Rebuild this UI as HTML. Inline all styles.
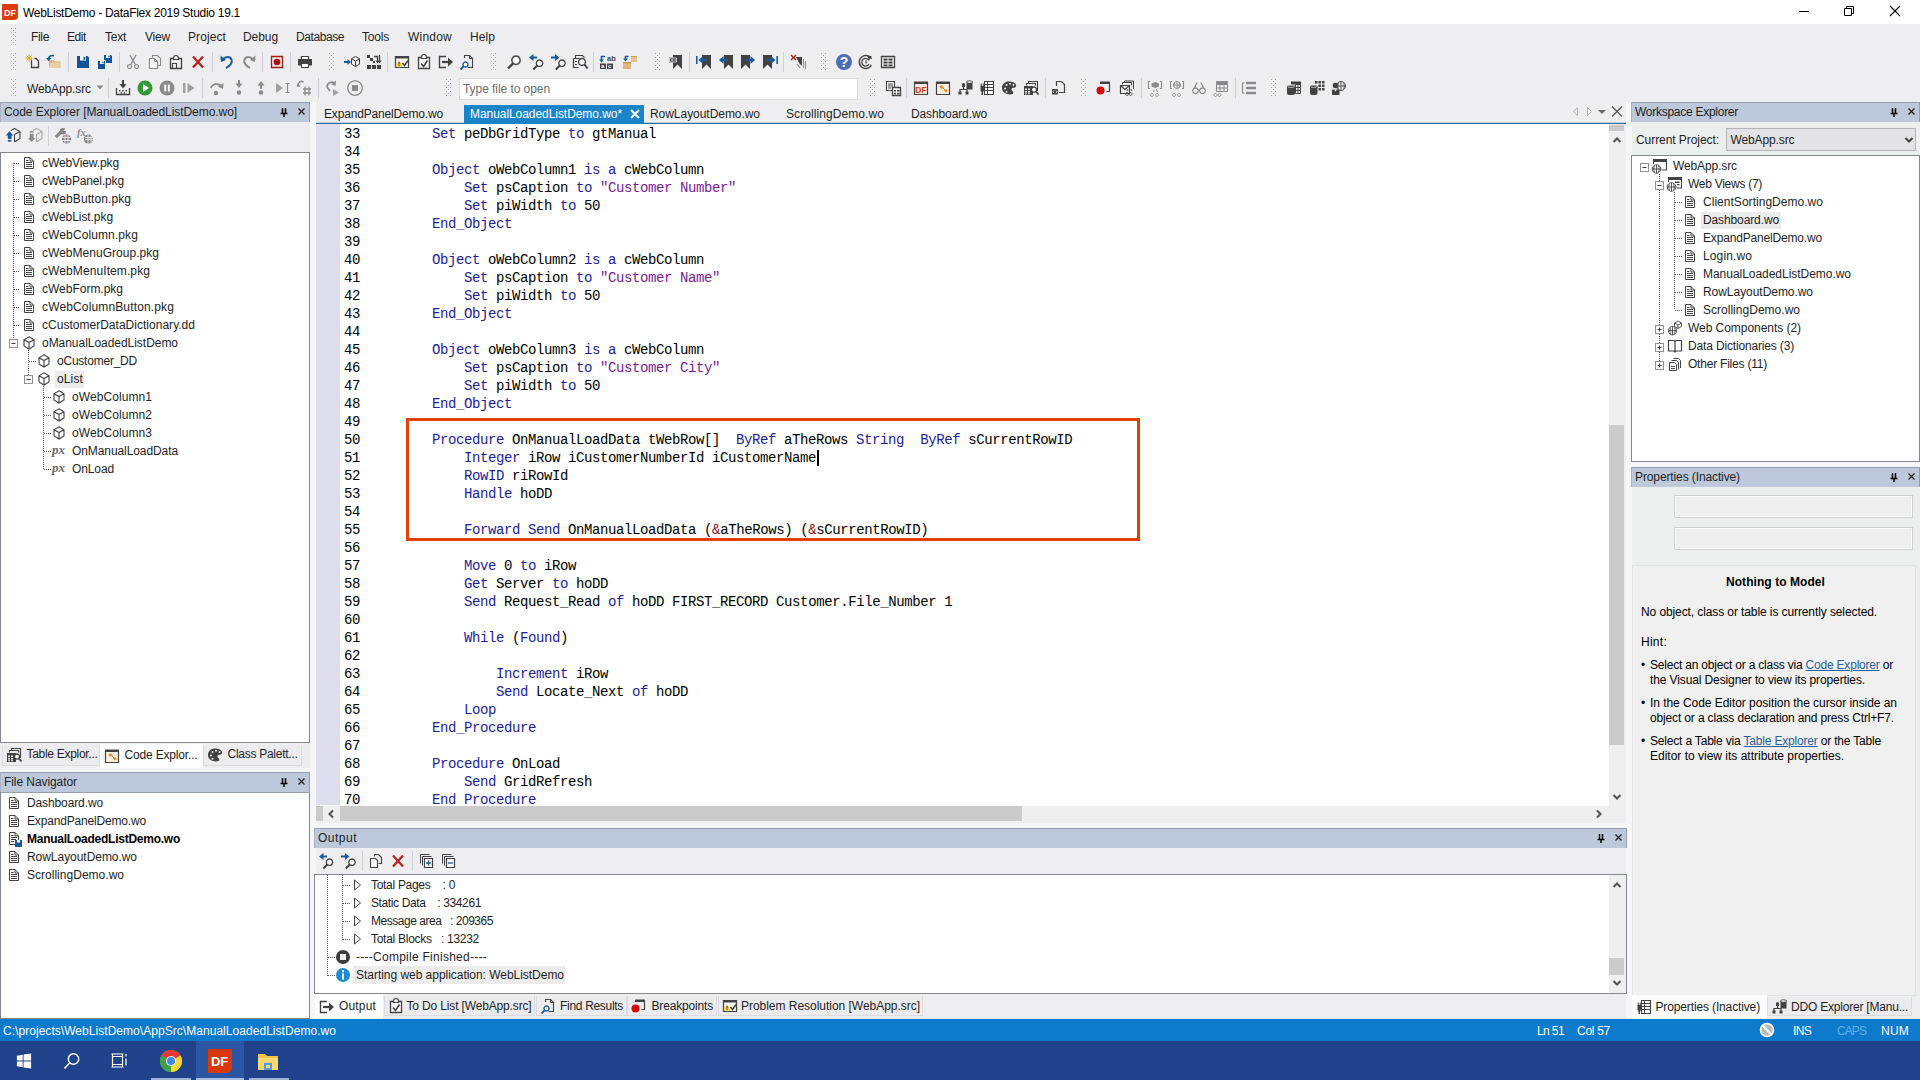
<!DOCTYPE html>
<html><head><meta charset="utf-8"><title>WebListDemo - DataFlex 2019 Studio 19.1</title>
<style>
html,body{margin:0;padding:0;}
body{width:1920px;height:1080px;overflow:hidden;position:relative;background:#eeeef0;font-family:"Liberation Sans",sans-serif;font-size:12px;color:#1e1e1e;}
body div,body span.t,body svg.i,body pre{position:absolute;box-sizing:border-box;}
span.t{white-space:pre;}
pre{margin:0;font-family:"Liberation Mono",monospace;font-size:14px;letter-spacing:-0.4px;line-height:18px;color:#000;white-space:pre;}
pre b{font-weight:normal;color:#1c1c9c;}
pre i{font-style:normal;color:#7a1a96;}
pre u{text-decoration:none;color:#8a1010;}
svg.i{overflow:visible;}
</style></head><body>
<div style="left:0px;top:0px;width:1920px;height:24px;background:#fff;"></div>
<div style="left:2px;top:4px;width:16px;height:16px;background:#dc3d0d;border-radius:1px 1px 4px 1px;"></div>
<span class="t" style="left:4px;top:4.03px;line-height:18px;font-size:9px;color:#fff;letter-spacing:0.002px;font-weight:bold;">DF</span>
<span class="t" style="left:23px;top:3.53px;line-height:18px;font-size:12px;color:#000;letter-spacing:-0.279px;">WebListDemo - DataFlex 2019 Studio 19.1</span>
<svg class="i" style="left:1790px;top:0" width="130" height="24"><path d="M9 11.5h10" stroke="#000" stroke-width="1"/><path d="M54.5 8.5h7v7h-7z M56.5 8.5v-2h7v7h-2" fill="none" stroke="#000" stroke-width="1"/><path d="M100 6l10 10M110 6l-10 10" stroke="#000" stroke-width="1.1"/></svg>
<div style="left:1632px;top:122px;width:288px;height:897px;background:#edeeee;"></div>
<div style="left:310px;top:102px;width:6px;height:917px;background:#f6f6f8;"></div>
<div style="left:1626px;top:102px;width:6px;height:917px;background:#f7f7f9;"></div>
<div style="left:316px;top:823px;width:1310px;height:5px;background:#f6f6f8;"></div>
<div style="left:1632px;top:462px;width:288px;height:5px;background:#f7f7f9;"></div>
<div style="left:0px;top:768px;width:310px;height:4px;background:#f4f4f6;"></div>
<svg class="i" style="left:11px;top:28px" width="5" height="18"><defs><pattern id="g11_28" width="4" height="4" patternUnits="userSpaceOnUse"><rect x="0" y="0" width="1" height="1" fill="#a5a5ad"/><rect x="2" y="2" width="1" height="1" fill="#a5a5ad"/></pattern></defs><rect width="5" height="18" fill="url(#g11_28)"/></svg>
<span class="t" style="left:31px;top:27.63px;line-height:18px;font-size:12px;color:#1e1e1e;letter-spacing:-0.334px;">File</span>
<span class="t" style="left:67px;top:27.63px;line-height:18px;font-size:12px;color:#1e1e1e;letter-spacing:-0.420px;">Edit</span>
<span class="t" style="left:105px;top:27.63px;line-height:18px;font-size:12px;color:#1e1e1e;letter-spacing:-0.252px;">Text</span>
<span class="t" style="left:145px;top:27.63px;line-height:18px;font-size:12px;color:#1e1e1e;letter-spacing:-0.198px;">View</span>
<span class="t" style="left:188px;top:27.63px;line-height:18px;font-size:12px;color:#1e1e1e;letter-spacing:0.093px;">Project</span>
<span class="t" style="left:243px;top:27.63px;line-height:18px;font-size:12px;color:#1e1e1e;letter-spacing:-0.072px;">Debug</span>
<span class="t" style="left:296px;top:27.63px;line-height:18px;font-size:12px;color:#1e1e1e;letter-spacing:-0.421px;">Database</span>
<span class="t" style="left:362px;top:27.63px;line-height:18px;font-size:12px;color:#1e1e1e;letter-spacing:-0.202px;">Tools</span>
<span class="t" style="left:408px;top:27.63px;line-height:18px;font-size:12px;color:#1e1e1e;letter-spacing:0.220px;">Window</span>
<span class="t" style="left:470px;top:27.63px;line-height:18px;font-size:12px;color:#1e1e1e;letter-spacing:0.080px;">Help</span>
<svg class="i" style="left:11px;top:53px" width="5" height="18"><defs><pattern id="g11_53" width="4" height="4" patternUnits="userSpaceOnUse"><rect x="0" y="0" width="1" height="1" fill="#a5a5ad"/><rect x="2" y="2" width="1" height="1" fill="#a5a5ad"/></pattern></defs><rect width="5" height="18" fill="url(#g11_53)"/></svg>
<svg class="i" style="left:25.0px;top:54.0px" width="16" height="16" viewBox="0 0 16 16"><path d="M6.500 5.500v8h7v-6.500l-2.500-2.500h-1.500" fill="none" stroke="#424242" stroke-width="1.3"/><path d="M4 .500v7M.500 4h7M1.500 1.500l5 5M6.500 1.500l-5 5" fill="none" stroke="#e8a317" stroke-width="1"/></svg>
<svg class="i" style="left:46.0px;top:54.0px" width="16" height="16" viewBox="0 0 16 16"><path d="M3 6h4.500l1.500 1.500h5.500v6.500H3z" fill="#dcb67a"/><path d="M5 8.500h10l-1.500 5.500H3z" fill="#ead2a4"/><path d="M8 1.800c-2.800-.900-5.300.300-5.300 3" fill="none" stroke="#1a5a9a" stroke-width="1.7"/><path d="M0 4h5.400L2.700 7.300z" fill="#1a5a9a"/></svg>
<div style="left:68px;top:52px;width:1px;height:20px;background:#cfcfd6;"></div>
<svg class="i" style="left:75.0px;top:54.0px" width="16" height="16" viewBox="0 0 16 16"><path d="M2 2h10.500l1.500 1.500v10.500H2z" fill="#0f5499"/><path d="M5 2h6v4.500H5z" fill="#fff"/><path d="M8.500 2.800h1.700v3H8.500z" fill="#0f5499"/></svg>
<svg class="i" style="left:97.0px;top:54.0px" width="16" height="16" viewBox="0 0 16 16"><path d="M7 1h7l1 1v7H7z" fill="#0f5499"/><path d="M9 1h4v3H9z" fill="#fff"/><path d="M11.300 1.500h1.200v2h-1.200z" fill="#0f5499"/><path d="M1 7h7l1 1v7H1z" fill="#0f5499"/><path d="M.500 6.500h8v9" fill="none" stroke="#eeeef0" stroke-width="1"/><path d="M3 7h4v3H3z" fill="#fff"/><path d="M5.300 7.500h1.200v2h-1.200z" fill="#0f5499"/></svg>
<div style="left:119px;top:52px;width:1px;height:20px;background:#cfcfd6;"></div>
<svg class="i" style="left:125.0px;top:54.0px" width="16" height="16" viewBox="0 0 16 16"><path d="M5 1l5.500 10M11 1l-5.500 10" fill="none" stroke="#8a8a8a" stroke-width="1.3"/><path d="M4.500 10.500a2 2 0 1 0 .01 0zM11.500 10.500a2 2 0 1 0 .01 0z" fill="none" stroke="#8a8a8a" stroke-width="1.2"/></svg>
<svg class="i" style="left:147.0px;top:54.0px" width="16" height="16" viewBox="0 0 16 16"><path d="M5.500 3.500v-2h5l3 3v7h-3" fill="none" stroke="#8a8a8a" stroke-width="1.1"/><path d="M2.500 4.500h5l3 3v7h-8z" fill="#f6f6f8" stroke="#8a8a8a" stroke-width="1.1"/><path d="M7.500 4.500v3h3" fill="none" stroke="#8a8a8a" stroke-width="1"/></svg>
<svg class="i" style="left:168.0px;top:54.0px" width="16" height="16" viewBox="0 0 16 16"><path d="M5 4.500h-2.500v10h11v-10h-2.500" fill="none" stroke="#424242" stroke-width="1.3"/><path d="M5.500 5.500v-1.500a2.500 2.500 0 0 1 5 0v1.500z" fill="none" stroke="#424242" stroke-width="1.2"/><path d="M4.500 9.500h4v5h-4z" fill="none" stroke="#424242" stroke-width="1.1"/></svg>
<svg class="i" style="left:190.0px;top:54.0px" width="16" height="16" viewBox="0 0 16 16"><path d="M3 2.500l10 11M13 2.500l-10 11" fill="none" stroke="#b8221c" stroke-width="2.3"/></svg>
<div style="left:212px;top:52px;width:1px;height:20px;background:#cfcfd6;"></div>
<svg class="i" style="left:219.0px;top:54.0px" width="16" height="16" viewBox="0 0 16 16"><path d="M3.500 6c2-3.500 7.500-4 9-.500 1.300 3.500-2 6.500-5.500 8.500" fill="none" stroke="#1a5a9a" stroke-width="2"/><path d="M1.500 1.500l.500 6.500 5-2z" fill="#1a5a9a"/></svg>
<svg class="i" style="left:241.0px;top:54.0px" width="16" height="16" viewBox="0 0 16 16"><path d="M12.500 6c-2-3.500-7.500-4-9-.500-1.300 3.500 2 6.500 5.500 8.500" fill="none" stroke="#8a8a8a" stroke-width="2"/><path d="M14.500 1.500l-.500 6.500-5-2z" fill="#8a8a8a"/></svg>
<div style="left:262px;top:52px;width:1px;height:20px;background:#cfcfd6;"></div>
<svg class="i" style="left:269.0px;top:54.0px" width="16" height="16" viewBox="0 0 16 16"><path d="M2.500 2.500h11v11h-11z" fill="#f6e4e2" stroke="#9c1f1a" stroke-width="1.3"/><circle cx="8" cy="8" r="3.300" fill="#ad1515"/></svg>
<div style="left:290px;top:52px;width:1px;height:20px;background:#cfcfd6;"></div>
<svg class="i" style="left:297.0px;top:54.0px" width="16" height="16" viewBox="0 0 16 16"><path d="M4 2h8v3H4z" fill="#fff"/><path d="M4.500 5v-2.500h7v2.500" fill="none" stroke="#424242" stroke-width="1.2"/><path d="M1 5h14v6.500H1z" fill="#424242"/><path d="M4 9h8v5H4z" fill="#fff"/><path d="M4.500 9.500h7v4h-7z" fill="none" stroke="#424242" stroke-width="1.1"/></svg>
<svg class="i" style="left:329px;top:53px" width="5" height="18"><defs><pattern id="g329_53" width="4" height="4" patternUnits="userSpaceOnUse"><rect x="0" y="0" width="1" height="1" fill="#a5a5ad"/><rect x="2" y="2" width="1" height="1" fill="#a5a5ad"/></pattern></defs><rect width="5" height="18" fill="url(#g329_53)"/></svg>
<svg class="i" style="left:344.0px;top:54.0px" width="16" height="16" viewBox="0 0 16 16"><path d="M0 8h4" fill="none" stroke="#1a5a9a" stroke-width="2"/><path d="M3.500 5l3.500 3-3.500 3z" fill="#1a5a9a"/><path d="M11.500 2.500l4 2.300v5.400l-4 2.300-4-2.300V4.800z M7.500 4.800l4 2.300 4-2.300M11.500 7.100v5.400" fill="none" stroke="#424242" stroke-width="1"/></svg>
<svg class="i" style="left:366.0px;top:54.0px" width="16" height="16" viewBox="0 0 16 16"><path d="M1 1h3v3H1zM4 4h3v3H4z M7 7h2v2H7z M1 11h4v4H1zM6 11h4v4H6zM11 11h4v4h-4z" fill="#424242"/><path d="M8 2.500h3.500v5M13.500 1v6" fill="none" stroke="#424242" stroke-width="1.3"/><path d="M9.500 6.500h4l-2 3z M11.500 6.500h4l-2 3z" fill="#424242"/></svg>
<div style="left:387px;top:52px;width:1px;height:20px;background:#cfcfd6;"></div>
<svg class="i" style="left:394.0px;top:54.0px" width="16" height="16" viewBox="0 0 16 16"><path d="M1.500 2.500h13v11h-13z" fill="#f6f6f6" stroke="#424242" stroke-width="1.2"/><path d="M1 2h14v2.500H1z" fill="#424242"/><path d="M5 6l3.500 6.500h-7z" fill="#f2d21b"/><path d="M4.600 8h.9v2.500h-.9zM4.600 11h.9v.9h-.9z" fill="#222"/><path d="M8.500 9l2 2.500 3.500-5" fill="none" stroke="#424242" stroke-width="1.5"/></svg>
<svg class="i" style="left:416.0px;top:54.0px" width="16" height="16" viewBox="0 0 16 16"><path d="M5 3.500h-2.500v11h11v-11h-2.500" fill="#f6f6f6" stroke="#424242" stroke-width="1.3"/><path d="M5.500 4.500v-1.500a2.500 2.500 0 0 1 5 0v1.500z" fill="#f6f6f6" stroke="#424242" stroke-width="1.2"/><path d="M5 9.500l2.500 3 4-6" fill="none" stroke="#424242" stroke-width="1.6"/></svg>
<svg class="i" style="left:438.0px;top:54.0px" width="16" height="16" viewBox="0 0 16 16"><path d="M8 2.500H1.500v11H8" fill="none" stroke="#424242" stroke-width="1.4"/><path d="M4 8h8" fill="none" stroke="#424242" stroke-width="2.2"/><path d="M10 3.500l5 4.500-5 4.500z" fill="#424242"/></svg>
<svg class="i" style="left:459.0px;top:54.0px" width="16" height="16" viewBox="0 0 16 16"><path d="M5.500 4v-2.500h5l3 3v9h-5" fill="none" stroke="#424242" stroke-width="1.1"/><path d="M10.500 1.500v3h3" fill="none" stroke="#424242" stroke-width="1"/><path d="M6.500 8a2.500 2.500 0 1 0 .01 0z" fill="#fff" stroke="#1a5a9a" stroke-width="1.4"/><path d="M4.800 12.200l-3.300 3.300" fill="none" stroke="#1a5a9a" stroke-width="1.8"/></svg>
<svg class="i" style="left:491px;top:53px" width="5" height="18"><defs><pattern id="g491_53" width="4" height="4" patternUnits="userSpaceOnUse"><rect x="0" y="0" width="1" height="1" fill="#a5a5ad"/><rect x="2" y="2" width="1" height="1" fill="#a5a5ad"/></pattern></defs><rect width="5" height="18" fill="url(#g491_53)"/></svg>
<svg class="i" style="left:506.0px;top:54.0px" width="16" height="16" viewBox="0 0 16 16"><path d="M10 2a4.200 4.200 0 1 0 .01 0z" fill="#fdfdfd" stroke="#424242" stroke-width="1.5"/><path d="M7 9.500l-5 5" fill="none" stroke="#424242" stroke-width="2.4"/></svg>
<svg class="i" style="left:529.0px;top:54.0px" width="16" height="16" viewBox="0 0 16 16"><path d="M10.500 6a3.200 3.200 0 1 0 .01 0z" fill="#fdfdfd" stroke="#424242" stroke-width="1.3"/><path d="M8.300 11.500l-4 4" fill="none" stroke="#424242" stroke-width="2"/><path d="M3 3.500h5" fill="none" stroke="#1a5a9a" stroke-width="2"/><path d="M4.500 0L0 3.500 4.500 7z" fill="#1a5a9a"/></svg>
<svg class="i" style="left:551.0px;top:54.0px" width="16" height="16" viewBox="0 0 16 16"><path d="M11 6a3.200 3.200 0 1 0 .01 0z" fill="#fdfdfd" stroke="#424242" stroke-width="1.3"/><path d="M8.800 11.500l-4 4" fill="none" stroke="#424242" stroke-width="2"/><path d="M0 3.500h5" fill="none" stroke="#1a5a9a" stroke-width="2"/><path d="M4 0l4.500 3.500L4 7z" fill="#1a5a9a"/></svg>
<svg class="i" style="left:572.0px;top:54.0px" width="16" height="16" viewBox="0 0 16 16"><path d="M3.500 4.500v-3h7l2 2" fill="none" stroke="#424242" stroke-width="1.1"/><path d="M1.500 4.500h6M1.500 4.500v9h5" fill="none" stroke="#424242" stroke-width="1.2"/><path d="M3 7.500h2M3 10.500h2" fill="none" stroke="#424242" stroke-width="1.2"/><path d="M10 4.500a3.500 3.500 0 1 0 .01 0z" fill="#fdfdfd" stroke="#424242" stroke-width="1.4"/><path d="M12.500 10.500l3 4" fill="none" stroke="#424242" stroke-width="2"/></svg>
<div style="left:593px;top:52px;width:1px;height:20px;background:#cfcfd6;"></div>
<svg class="i" style="left:599.0px;top:54.0px" width="16" height="16" viewBox="0 0 16 16"><path d="M6 2.500h-3.500v3.500" fill="none" stroke="#1a5a9a" stroke-width="1.6"/><path d="M0 5.500h5l-2.500 3z" fill="#1a5a9a"/><path d="M1 9.500h6v5.500H1zM8 9.500h6v5.500H8z" fill="#424242"/><text x="8" y="7" font-family="Liberation Sans" font-weight="bold" font-size="7.500" fill="#424242">ab</text><text x="2" y="14.300" font-family="Liberation Sans" font-weight="bold" font-size="6" fill="#fff">a</text><text x="9" y="14.300" font-family="Liberation Sans" font-weight="bold" font-size="6" fill="#fff">c</text></svg>
<svg class="i" style="left:622.0px;top:54.0px" width="16" height="16" viewBox="0 0 16 16"><path d="M1 8h8v7H1z" fill="#dcb67a"/><path d="M9 2h6v6H9z" fill="#e3c38f"/><path d="M1 8h8v1.500H1zM9 2h6v1.300H9z" fill="#c9a062"/><path d="M6.500 2.500h-3v3" fill="none" stroke="#1a5a9a" stroke-width="1.6"/><path d="M1 4.500h5l-2.500 3z" fill="#1a5a9a"/></svg>
<svg class="i" style="left:655px;top:53px" width="5" height="18"><defs><pattern id="g655_53" width="4" height="4" patternUnits="userSpaceOnUse"><rect x="0" y="0" width="1" height="1" fill="#a5a5ad"/><rect x="2" y="2" width="1" height="1" fill="#a5a5ad"/></pattern></defs><rect width="5" height="18" fill="url(#g655_53)"/></svg>
<svg class="i" style="left:668.0px;top:54.0px" width="16" height="16" viewBox="0 0 16 16"><path d="M5 1h9v14l-4.500-4.500L5 15z" fill="#424242"/><path d="M1 3.500h8v5H1z" fill="#424242"/><path d="M1.500 4h7v4h-7z" fill="none" stroke="#eeeef0" stroke-width="0.8"/><path d="M3 6h2.500M6.500 6h1" fill="none" stroke="#fff" stroke-width="1.2"/></svg>
<div style="left:689px;top:52px;width:1px;height:20px;background:#cfcfd6;"></div>
<svg class="i" style="left:696.0px;top:54.0px" width="16" height="16" viewBox="0 0 16 16"><path d="M6 1h9v14l-4.500-4.500L6 15z" fill="#424242"/><path d="M0 2h1.600v8H0z" fill="#1a5a9a"/><path d="M5 6h6" fill="none" stroke="#1a5a9a" stroke-width="2.2"/><path d="M7 2L2.500 6 7 10z" fill="#1a5a9a"/></svg>
<svg class="i" style="left:718.0px;top:54.0px" width="16" height="16" viewBox="0 0 16 16"><path d="M6 1h9v14l-4.500-4.500L6 15z" fill="#424242"/><path d="M3.500 6h6" fill="none" stroke="#1a5a9a" stroke-width="2.2"/><path d="M5.500 2L1 6l4.500 4z" fill="#1a5a9a"/></svg>
<svg class="i" style="left:740.0px;top:54.0px" width="16" height="16" viewBox="0 0 16 16"><path d="M1 1h9v14l-4.500-4.500L1 15z" fill="#424242"/><path d="M6 6h6" fill="none" stroke="#1a5a9a" stroke-width="2.2"/><path d="M10.500 2L15 6l-4.500 4z" fill="#1a5a9a"/></svg>
<svg class="i" style="left:762.0px;top:54.0px" width="16" height="16" viewBox="0 0 16 16"><path d="M1 1h9v14l-4.500-4.500L1 15z" fill="#424242"/><path d="M5 6h6" fill="none" stroke="#1a5a9a" stroke-width="2.2"/><path d="M9 2l4.500 4L9 10z" fill="#1a5a9a"/><path d="M14.400 2H16v8h-1.600z" fill="#1a5a9a"/></svg>
<div style="left:783px;top:52px;width:1px;height:20px;background:#cfcfd6;"></div>
<svg class="i" style="left:790.0px;top:54.0px" width="16" height="16" viewBox="0 0 16 16"><path d="M1 1l5 5M6 1l-5 5" fill="none" stroke="#b8221c" stroke-width="1.5"/><path d="M6 3h6v9l-3-3z" fill="#424242"/><path d="M13.500 5v9M15.500 7v8" fill="none" stroke="#8a8a8a" stroke-width="1"/><path d="M7 10l3 4" fill="none" stroke="#8a8a8a" stroke-width="1.2"/></svg>
<svg class="i" style="left:821px;top:53px" width="5" height="18"><defs><pattern id="g821_53" width="4" height="4" patternUnits="userSpaceOnUse"><rect x="0" y="0" width="1" height="1" fill="#a5a5ad"/><rect x="2" y="2" width="1" height="1" fill="#a5a5ad"/></pattern></defs><rect width="5" height="18" fill="url(#g821_53)"/></svg>
<svg class="i" style="left:836.0px;top:54.0px" width="16" height="16" viewBox="0 0 16 16"><circle cx="8" cy="8" r="8" fill="#4a6fb3"/><text x="8" y="13" text-anchor="middle" font-family="Liberation Sans" font-weight="bold" font-size="14" fill="#fff">?</text></svg>
<svg class="i" style="left:858.0px;top:54.0px" width="16" height="16" viewBox="0 0 16 16"><path d="M13.500 5A6.500 6.500 0 1 0 13.500 11" fill="none" stroke="#424242" stroke-width="1.5"/><path d="M11 6.500a3.800 3.800 0 1 0 0 3.500" fill="none" stroke="#424242" stroke-width="1.3"/><path d="M9 1l5 1.500-3 3.500z" fill="#424242"/><path d="M8 6.500v3" fill="none" stroke="#424242" stroke-width="1.2"/></svg>
<svg class="i" style="left:880.0px;top:54.0px" width="16" height="16" viewBox="0 0 16 16"><path d="M1.500 2.500h13v11h-13z" fill="#f6f6f6" stroke="#424242" stroke-width="1.3"/><path d="M3.500 4.500h4v2h-4zM8.500 4.500h4v2h-4zM3.500 7.500h4v2h-4zM8.500 7.500h4v2h-4zM3.500 10.500h4v1.800h-4zM8.500 10.500h4v1.800h-4z" fill="#424242"/></svg>
<svg class="i" style="left:11px;top:79px" width="5" height="18"><defs><pattern id="g11_79" width="4" height="4" patternUnits="userSpaceOnUse"><rect x="0" y="0" width="1" height="1" fill="#a5a5ad"/><rect x="2" y="2" width="1" height="1" fill="#a5a5ad"/></pattern></defs><rect width="5" height="18" fill="url(#g11_79)"/></svg>
<span class="t" style="left:27px;top:79.53px;line-height:18px;font-size:12px;color:#1e1e1e;letter-spacing:-0.114px;">WebApp.src</span>
<svg class="i" style="left:96px;top:85px" width="8" height="5"><path d="M0.5 0.5h7l-3.5 4z" fill="#8a8a8a"/></svg>
<div style="left:108px;top:78px;width:1px;height:20px;background:#cfcfd6;"></div>
<svg class="i" style="left:115.0px;top:80.0px" width="16" height="16" viewBox="0 0 16 16"><path d="M1.500 8v6.500h13v-6.500" fill="none" stroke="#424242" stroke-width="1.3"/><path d="M8 0v6" fill="none" stroke="#424242" stroke-width="2"/><path d="M4.500 4h7L8 8.500z" fill="#424242"/><path d="M4 10h1.500v1.500H4zM7.200 10h1.500v1.500H7.200zM10.500 10h1.500v1.500h-1.500zM5.600 12.200h1.500v1.500H5.600zM8.800 12.200h1.500v1.500H8.800z" fill="#424242"/></svg>
<svg class="i" style="left:137.0px;top:80.0px" width="16" height="16" viewBox="0 0 16 16"><circle cx="8" cy="8" r="7.500" fill="#339933"/><path d="M6 4l6 4-6 4z" fill="#fff"/></svg>
<svg class="i" style="left:159.0px;top:80.0px" width="16" height="16" viewBox="0 0 16 16"><circle cx="8" cy="8" r="7.500" fill="#8a8a8a"/><path d="M5.200 4.500h2v7h-2zM8.800 4.500h2v7h-2z" fill="#fff"/></svg>
<svg class="i" style="left:181.0px;top:80.0px" width="16" height="16" viewBox="0 0 16 16"><path d="M2 3h2.500v10H2z" fill="#a0a0a0"/><path d="M6.500 3l7 5-7 5z" fill="#a0a0a0"/></svg>
<div style="left:202px;top:78px;width:1px;height:20px;background:#cfcfd6;"></div>
<svg class="i" style="left:209.0px;top:80.0px" width="16" height="16" viewBox="0 0 16 16"><path d="M2 8c1-4.500 8-5.500 11-1" fill="none" stroke="#8a8a8a" stroke-width="1.8"/><path d="M14.500 3l-.500 6-5-2.500z" fill="#8a8a8a"/><circle cx="7" cy="13" r="2.200" fill="#8a8a8a"/></svg>
<svg class="i" style="left:231.0px;top:80.0px" width="16" height="16" viewBox="0 0 16 16"><path d="M8 0v4.500" fill="none" stroke="#8a8a8a" stroke-width="2"/><path d="M4.500 3.500h7L8 8z" fill="#8a8a8a"/><circle cx="8" cy="12.500" r="2.200" fill="#8a8a8a"/></svg>
<svg class="i" style="left:253.0px;top:80.0px" width="16" height="16" viewBox="0 0 16 16"><path d="M8 8.800v-4.300" fill="none" stroke="#8a8a8a" stroke-width="2"/><path d="M4.500 5.500h7L8 1z" fill="#8a8a8a"/><circle cx="8" cy="12.500" r="2.200" fill="#8a8a8a"/></svg>
<svg class="i" style="left:275.0px;top:80.0px" width="16" height="16" viewBox="0 0 16 16"><path d="M1 3l7 5-7 5z" fill="#a0a0a0"/><path d="M10.500 3.500h4M10.500 12.500h4M12.500 3.500v9" fill="none" stroke="#8a8a8a" stroke-width="1.2"/></svg>
<svg class="i" style="left:297.0px;top:80.0px" width="16" height="16" viewBox="0 0 16 16"><path d="M1 5c0-3 3-4.500 5.500-3" fill="none" stroke="#8a8a8a" stroke-width="1.5"/><path d="M1 3l-1.500 3.500 4 .500z" fill="#8a8a8a"/><path d="M8 6.500v9M12 6.500v9M6 9h8M6 13h8" fill="none" stroke="#8a8a8a" stroke-width="1.3"/></svg>
<div style="left:318px;top:78px;width:1px;height:20px;background:#cfcfd6;"></div>
<svg class="i" style="left:324.0px;top:80.0px" width="16" height="16" viewBox="0 0 16 16"><path d="M3 7c0-4 4-6 7.500-4" fill="none" stroke="#8a8a8a" stroke-width="1.7"/><path d="M12 .500l-.500 5.500-4.500-2z" fill="#8a8a8a"/><path d="M9 9l6 3.500-6 3.500z" fill="#a0a0a0"/><path d="M3 7l3 4" fill="none" stroke="#8a8a8a" stroke-width="1.5"/></svg>
<svg class="i" style="left:347.0px;top:80.0px" width="16" height="16" viewBox="0 0 16 16"><path d="M8 .800a7.200 7.200 0 1 0 .01 0z" fill="none" stroke="#8a8a8a" stroke-width="1.3"/><path d="M5 5h6v6H5z" fill="#8a8a8a"/></svg>
<svg class="i" style="left:446px;top:79px" width="5" height="18"><defs><pattern id="g446_79" width="4" height="4" patternUnits="userSpaceOnUse"><rect x="0" y="0" width="1" height="1" fill="#a5a5ad"/><rect x="2" y="2" width="1" height="1" fill="#a5a5ad"/></pattern></defs><rect width="5" height="18" fill="url(#g446_79)"/></svg>
<svg class="i" style="left:870px;top:79px" width="5" height="18"><defs><pattern id="g870_79" width="4" height="4" patternUnits="userSpaceOnUse"><rect x="0" y="0" width="1" height="1" fill="#a5a5ad"/><rect x="2" y="2" width="1" height="1" fill="#a5a5ad"/></pattern></defs><rect width="5" height="18" fill="url(#g870_79)"/></svg>
<svg class="i" style="left:885.0px;top:80.0px" width="16" height="16" viewBox="0 0 16 16"><path d="M1.500 1.500h8v9h-8z" fill="#f6f6f6" stroke="#424242" stroke-width="1.1"/><path d="M3 4h5M3 6h5M3 8h3" fill="none" stroke="#424242" stroke-width="1"/><path d="M7.500 7.500h8v8h-8z" fill="#f6f6f6" stroke="#424242" stroke-width="1.3"/><path d="M9 10h2v1.500H9zM12 10h2.500v1.500H12zM9 12.800h2v1.500H9zM12 12.800h2.500v1.500H12z" fill="#424242"/></svg>
<div style="left:906px;top:78px;width:1px;height:20px;background:#cfcfd6;"></div>
<svg class="i" style="left:913.0px;top:80.0px" width="16" height="16" viewBox="0 0 16 16"><path d="M1.500 2.500h13v12h-13z" fill="#fbe9e2" stroke="#424242" stroke-width="1.2"/><path d="M1 1.500h14v2.500H1z" fill="#424242"/><text x="8" y="12.800" text-anchor="middle" font-family="Liberation Sans" font-weight="bold" font-size="8.500" fill="#d4430f">DF</text></svg>
<svg class="i" style="left:935.0px;top:80.0px" width="16" height="16" viewBox="0 0 16 16"><path d="M1.500 2.500h13v12h-13z" fill="#faefe2" stroke="#424242" stroke-width="1.2"/><path d="M1 1.500h14v2.500H1z" fill="#424242"/><path d="M4 6.500l3-1.500 2 2.500-3 1.500zM9 10l2.500-1 1.500 2.500-2.500 1z" fill="#d89a3a"/><path d="M8 8l2.500 2.500" fill="none" stroke="#b07820" stroke-width="1"/></svg>
<svg class="i" style="left:957.0px;top:80.0px" width="16" height="16" viewBox="0 0 16 16"><path d="M6.500 3.500v2M6.500 5.500M3 12v-2.500h7v2.500M6.500 7v2.500" fill="none" stroke="#424242" stroke-width="1.2"/><path d="M5 3.500h3v3.500H5zM1.500 11.500h3v3h-3zM8.500 11.500h3v3h-3z" fill="#424242"/><path d="M9.500 1.500h6v8h-6z" fill="#424242"/><ellipse cx="12.500" cy="2" rx="3" ry="1.300" fill="#eeeef2" stroke="#424242" stroke-width=".8"/></svg>
<svg class="i" style="left:979.0px;top:80.0px" width="16" height="16" viewBox="0 0 16 16"><path d="M5.500 1.500h9v13h-9z" fill="#fafafa" stroke="#424242" stroke-width="1.1"/><path d="M5.500 4.500h9M5.500 7.500h9M5.500 10.500h9M8.500 1.500v13" fill="none" stroke="#424242" stroke-width="1"/><path d="M1.500 6h3.500v5l-1 1v3h-1.500v-3l-1-1z" fill="#424242"/><path d="M2.200 3.500v3M4.200 3.500v3" fill="none" stroke="#424242" stroke-width="1"/></svg>
<svg class="i" style="left:1001.0px;top:80.0px" width="16" height="16" viewBox="0 0 16 16"><path d="M8 1.500c5 0 8 2.500 7 5-1 2-4 .500-4.500 2.500s3 2.500 1.500 4.500C10 15.500 1 14.500 1 8c0-4 3-6.500 7-6.500z" fill="#424242"/><circle cx="4" cy="8.500" r="1" fill="#eee"/><circle cx="5.500" cy="5" r="1" fill="#eee"/><circle cx="9" cy="3.800" r="1" fill="#eee"/><circle cx="5.500" cy="11.800" r="1" fill="#eee"/><circle cx="12.500" cy="5" r="1" fill="#eee"/></svg>
<svg class="i" style="left:1023.0px;top:80.0px" width="16" height="16" viewBox="0 0 16 16"><path d="M5.500 3.500v-2h9v9h-2" fill="none" stroke="#424242" stroke-width="1.1"/><path d="M3.500 5.500v-2h9v2" fill="none" stroke="#424242" stroke-width="1.1"/><path d="M1 6h9v9H1z" fill="#424242"/><path d="M2 8.500h2v1.500H2zM5 8.500h2v1.500H5zM2 11h2v1.500H2zM5 11h2v1.500H5zM2 13.200h2v1H2zM5 13.200h2v1H5z" fill="#eee"/><path d="M11 7a2.600 2.600 0 1 0 .01 0z" fill="#fdfdfd" stroke="#424242" stroke-width="1.3"/><path d="M13 11.500l2.500 3" fill="none" stroke="#424242" stroke-width="1.8"/></svg>
<div style="left:1045px;top:78px;width:1px;height:20px;background:#cfcfd6;"></div>
<svg class="i" style="left:1051.0px;top:80.0px" width="16" height="16" viewBox="0 0 16 16"><path d="M5.500 6v-4.500h5l3 3v8h-5.500" fill="none" stroke="#424242" stroke-width="1.2"/><path d="M1 9h6v5.500H1z" fill="#424242"/><path d="M3 10.500l-1 1.300 1 1.300M5 10.500l1 1.300-1 1.300" fill="none" stroke="#fff" stroke-width="0.9"/></svg>
<svg class="i" style="left:1081px;top:79px" width="5" height="18"><defs><pattern id="g1081_79" width="4" height="4" patternUnits="userSpaceOnUse"><rect x="0" y="0" width="1" height="1" fill="#a5a5ad"/><rect x="2" y="2" width="1" height="1" fill="#a5a5ad"/></pattern></defs><rect width="5" height="18" fill="url(#g1081_79)"/></svg>
<svg class="i" style="left:1096.0px;top:80.0px" width="16" height="16" viewBox="0 0 16 16"><path d="M4.500 3.500h9v8h-3" fill="none" stroke="#424242" stroke-width="1.2"/><path d="M4 1.500h10v2.500H4z" fill="#424242"/><circle cx="4.500" cy="10.500" r="4" fill="#d40a0a"/></svg>
<svg class="i" style="left:1119.0px;top:80.0px" width="16" height="16" viewBox="0 0 16 16"><path d="M5.500 2.500v-1.500h9v8" fill="none" stroke="#424242" stroke-width="1"/><path d="M3.500 4.500v-2h9v3" fill="none" stroke="#424242" stroke-width="1"/><path d="M1.500 5.500h9v8h-9zM1.500 5.500l4.500 4 4.500-4" fill="none" stroke="#424242" stroke-width="1.2"/><path d="M8 12.500a1.500 1.500 0 1 0 .01 0M11.500 12.500a1.500 1.500 0 1 0 .01 0M9.500 13.500h.5M8 11l1-2M13 11l-1-2" fill="none" stroke="#424242" stroke-width="0.9"/></svg>
<div style="left:1141px;top:78px;width:1px;height:20px;background:#cfcfd6;"></div>
<svg class="i" style="left:1147.0px;top:80.0px" width="16" height="16" viewBox="0 0 16 16"><path d="M3 1.500h-1.500v7h1.500M13 1.500h1.500v7h-1.500" fill="none" stroke="#8a8a8a" stroke-width="1.1"/><path d="M4.500 3.500l4-1.500 3.500 1.500v3l-3.500 1.500-4-1.500z" fill="#8a8a8a"/><path d="M5 13.500a1.500 1.500 0 1 0 .01 0M10 13.500a1.500 1.500 0 1 0 .01 0M6.500 12l1-2.500M10.500 12l-1-2.500" fill="none" stroke="#8a8a8a" stroke-width="0.9"/></svg>
<svg class="i" style="left:1169.0px;top:80.0px" width="16" height="16" viewBox="0 0 16 16"><path d="M3 1.500h-1.500v7h1.500M13 1.500h1.500v7h-1.500" fill="none" stroke="#8a8a8a" stroke-width="1.1"/><path d="M8 1.500a3.500 3.500 0 1 0 .01 0zM4.500 5h7M8 1.500v7M6 2.500c-1 2-1 3.500 0 5M10 2.500c1 2 1 3.500 0 5" fill="none" stroke="#8a8a8a" stroke-width="0.9"/><path d="M5 13.500a1.500 1.500 0 1 0 .01 0M10 13.500a1.500 1.500 0 1 0 .01 0" fill="none" stroke="#8a8a8a" stroke-width="0.9"/></svg>
<svg class="i" style="left:1191.0px;top:80.0px" width="16" height="16" viewBox="0 0 16 16"><path d="M4.500 8a2.800 2.800 0 1 0 .01 0zM11.500 8a2.800 2.800 0 1 0 .01 0zM7.300 10.500h1.400M3 8.500l3-6M13 8.500l-3-6" fill="none" stroke="#8a8a8a" stroke-width="1.3"/></svg>
<svg class="i" style="left:1213.0px;top:80.0px" width="16" height="16" viewBox="0 0 16 16"><path d="M3.500 1.500h11v10h-11zM3.500 4.500h11M3.500 8h11M7 1.500v10M11 1.500v10" fill="none" stroke="#8a8a8a" stroke-width="1"/><path d="M3.500 1.500h11v2.500h-11z" fill="#8a8a8a"/><path d="M2.500 13.500a1.500 1.500 0 1 0 .01 0M6.500 13.500a1.500 1.500 0 1 0 .01 0" fill="none" stroke="#8a8a8a" stroke-width="0.9"/></svg>
<div style="left:1235px;top:78px;width:1px;height:20px;background:#cfcfd6;"></div>
<svg class="i" style="left:1241.0px;top:80.0px" width="16" height="16" viewBox="0 0 16 16"><path d="M5 3h10M5 8h10M5 13h10" fill="none" stroke="#8a8a8a" stroke-width="2.4"/><path d="M3.500 3h-2v10h2" fill="none" stroke="#8a8a8a" stroke-width="1.2"/></svg>
<svg class="i" style="left:1271px;top:79px" width="5" height="18"><defs><pattern id="g1271_79" width="4" height="4" patternUnits="userSpaceOnUse"><rect x="0" y="0" width="1" height="1" fill="#a5a5ad"/><rect x="2" y="2" width="1" height="1" fill="#a5a5ad"/></pattern></defs><rect width="5" height="18" fill="url(#g1271_79)"/></svg>
<svg class="i" style="left:1286.0px;top:80.0px" width="16" height="16" viewBox="0 0 16 16"><path d="M5 1.500h10v3H5z" fill="#424242"/><path d="M9.500 4.500h5v9h-5zM9.500 7.500h5M9.500 10.500h5M12 4.500v9" fill="none" stroke="#424242" stroke-width="1"/><path d="M1 6.500c0-2 8-2 8 0v7c0 2-8 2-8 0z" fill="#424242"/><ellipse cx="5" cy="6.500" rx="3.300" ry="1" fill="none" stroke="#ddd" stroke-width=".7"/></svg>
<svg class="i" style="left:1309.0px;top:80.0px" width="16" height="16" viewBox="0 0 16 16"><path d="M6 1h2.500v2.500H6zM9.500 1h2.500v2.500H9.500zM13 1h2.500v2.500H13zM9.500 4.500h2.500v2.500H9.500zM13 4.500h2.500v2.500H13zM9.500 8h2.500v2.500H9.500zM13 8h2.500v2.500H13z" fill="#424242"/><path d="M1 6.500c0-2 7.500-2 7.500 0v7c0 2-7.500 2-7.500 0z" fill="#424242"/><ellipse cx="4.700" cy="6.500" rx="3" ry="1" fill="none" stroke="#ddd" stroke-width=".7"/></svg>
<svg class="i" style="left:1331.0px;top:80.0px" width="16" height="16" viewBox="0 0 16 16"><path d="M10 1.500a4.500 4.500 0 1 0 .01 0zM5.500 6h9M10 1.500v9M7.500 2.500c-1 2-1 5 0 7M12.500 2.500c1 2 1 5 0 7" fill="none" stroke="#424242" stroke-width="0.9"/><circle cx="4.500" cy="5.500" r="2.800" fill="#424242"/><path d="M1 9.500h7.500v5.500H1z" fill="#424242"/><path d="M3 9.500h3l-1.500 2z" fill="#eee"/></svg>
<div style="left:459px;top:78px;width:399px;height:22px;background:#fff;border:1px solid #dcdce0;"></div>
<span class="t" style="left:463px;top:79.53px;line-height:18px;font-size:12px;color:#6d6d6d;letter-spacing:-0.062px;">Type file to open</span>
<div style="left:0px;top:102px;width:310px;height:20px;background:#bdc9db;border:1px solid #959eae;border-bottom:none;border-left-color:#a9b2c2;"></div>
<span class="t" style="left:4px;top:103.43px;line-height:18px;font-size:12px;color:#1e1e1e;letter-spacing:-0.063px;">Code Explorer [ManualLoadedListDemo.wo]</span>
<svg class="i" style="left:280px;top:106px" width="28" height="12"><path d="M2.500 2v5.500M5.500 2v5.500M0.500 7.500h7M4 7.500v3.500" stroke="#000" stroke-width="1.500" fill="none"/><path d="M18.500 2.500l6 6M24.500 2.500l-6 6" stroke="#1e1e1e" stroke-width="1.300"/></svg>
<svg class="i" style="left:5.0px;top:128.0px" width="16" height="16" viewBox="0 0 16 16"><path d="M9.500 .500l5.500 3v7l-5.500 3.500M9.500 .500l-3.500 2M9.500 6.500l5.500-3M9.500 6.500v7.500" fill="none" stroke="#424242" stroke-width="1.1"/><path d="M4.500 3L8.200 7.500H6.500V11H2.800V7.500H.800z" fill="#1a5a9a"/><path d="M2.800 12h3.700v1.600H2.800z" fill="#1a5a9a"/></svg>
<svg class="i" style="left:27.0px;top:128.0px" width="16" height="16" viewBox="0 0 16 16"><path d="M9.500 .500l5.500 3v7l-5.500 3.500M9.500 .500l-3.500 2M9.500 6.500l5.500-3M9.500 6.500v7.500" fill="none" stroke="#a6a6a6" stroke-width="1.1"/><path d="M2.800 3h3.700v1.600H2.800z" fill="#8a8a8a"/><path d="M2.800 5.800h3.700V10h1.900L4.650 14 .900 10h1.900z" fill="#8a8a8a"/></svg>
<svg class="i" style="left:54.0px;top:128.0px" width="16" height="16" viewBox="0 0 16 16"><path d="M1.800 9.200L7.500 3.500" fill="none" stroke="#8a8a8a" stroke-width="3.2"/><circle cx="9" cy="3.200" r="3.200" fill="#868686"/><path d="M9.300 2.700L12.800 -1 13.500 3.500z" fill="#eeeef0"/><circle cx="12.500" cy="11" r="4.600" fill="#868686"/><path d="M11 6.800v8.400M14 6.800v8.400M8.200 9.500h8.600M8.200 12.500h8.600" fill="none" stroke="#f2f2f2" stroke-width="0.9"/></svg>
<svg class="i" style="left:77.0px;top:128.0px" width="16" height="16" viewBox="0 0 16 16"><text x="0" y="8" font-family="Liberation Serif" font-style="italic" font-weight="bold" font-size="10.500" fill="#8a8a8a">fx</text><circle cx="11.500" cy="11" r="4.600" fill="#868686"/><path d="M11 6.800v8.400M14 6.800v8.400M8.200 9.500h8.600M8.200 11.500h8.600" fill="none" stroke="#f2f2f2" stroke-width="0.9"/></svg>
<div style="left:48px;top:126px;width:1px;height:20px;background:#cfcfd6;"></div>
<div style="left:0px;top:152px;width:310px;height:591px;background:#fff;border:1px solid #828790;"></div>
<svg class="i" style="left:21.0px;top:155.0px" width="16" height="16" viewBox="0 0 16 16"><path d="M3.500 2.500h5.500l3.500 3.500v7.500h-9z" fill="#fff" stroke="#424242" stroke-width="1"/><path d="M9 2.500v3.500h3.500" fill="none" stroke="#424242" stroke-width="1"/><path d="M5 5.500h2.500M5 7.500h6M5 9.500h6M5 11.500h6" fill="none" stroke="#424242" stroke-width="1"/></svg>
<span class="t" style="left:42px;top:154.03px;line-height:18px;font-size:12px;color:#1e1e1e;letter-spacing:-0.106px;">cWebView.pkg</span>
<svg class="i" style="left:21.0px;top:173.0px" width="16" height="16" viewBox="0 0 16 16"><path d="M3.500 2.500h5.500l3.500 3.500v7.500h-9z" fill="#fff" stroke="#424242" stroke-width="1"/><path d="M9 2.500v3.500h3.500" fill="none" stroke="#424242" stroke-width="1"/><path d="M5 5.500h2.500M5 7.500h6M5 9.500h6M5 11.500h6" fill="none" stroke="#424242" stroke-width="1"/></svg>
<span class="t" style="left:42px;top:172.03px;line-height:18px;font-size:12px;color:#1e1e1e;letter-spacing:-0.141px;">cWebPanel.pkg</span>
<svg class="i" style="left:21.0px;top:191.0px" width="16" height="16" viewBox="0 0 16 16"><path d="M3.500 2.500h5.500l3.500 3.500v7.500h-9z" fill="#fff" stroke="#424242" stroke-width="1"/><path d="M9 2.500v3.500h3.500" fill="none" stroke="#424242" stroke-width="1"/><path d="M5 5.500h2.500M5 7.500h6M5 9.500h6M5 11.500h6" fill="none" stroke="#424242" stroke-width="1"/></svg>
<span class="t" style="left:42px;top:190.03px;line-height:18px;font-size:12px;color:#1e1e1e;letter-spacing:0.083px;">cWebButton.pkg</span>
<svg class="i" style="left:21.0px;top:209.0px" width="16" height="16" viewBox="0 0 16 16"><path d="M3.500 2.500h5.500l3.500 3.500v7.500h-9z" fill="#fff" stroke="#424242" stroke-width="1"/><path d="M9 2.500v3.500h3.500" fill="none" stroke="#424242" stroke-width="1"/><path d="M5 5.500h2.500M5 7.500h6M5 9.500h6M5 11.500h6" fill="none" stroke="#424242" stroke-width="1"/></svg>
<span class="t" style="left:42px;top:208.03px;line-height:18px;font-size:12px;color:#1e1e1e;letter-spacing:-0.068px;">cWebList.pkg</span>
<svg class="i" style="left:21.0px;top:227.0px" width="16" height="16" viewBox="0 0 16 16"><path d="M3.500 2.500h5.500l3.500 3.500v7.500h-9z" fill="#fff" stroke="#424242" stroke-width="1"/><path d="M9 2.500v3.500h3.500" fill="none" stroke="#424242" stroke-width="1"/><path d="M5 5.500h2.500M5 7.500h6M5 9.500h6M5 11.500h6" fill="none" stroke="#424242" stroke-width="1"/></svg>
<span class="t" style="left:42px;top:226.03px;line-height:18px;font-size:12px;color:#1e1e1e;letter-spacing:0.108px;">cWebColumn.pkg</span>
<svg class="i" style="left:21.0px;top:245.0px" width="16" height="16" viewBox="0 0 16 16"><path d="M3.500 2.500h5.500l3.500 3.500v7.500h-9z" fill="#fff" stroke="#424242" stroke-width="1"/><path d="M9 2.500v3.500h3.500" fill="none" stroke="#424242" stroke-width="1"/><path d="M5 5.500h2.500M5 7.500h6M5 9.500h6M5 11.500h6" fill="none" stroke="#424242" stroke-width="1"/></svg>
<span class="t" style="left:42px;top:244.03px;line-height:18px;font-size:12px;color:#1e1e1e;letter-spacing:0.029px;">cWebMenuGroup.pkg</span>
<svg class="i" style="left:21.0px;top:263.0px" width="16" height="16" viewBox="0 0 16 16"><path d="M3.500 2.500h5.500l3.500 3.500v7.500h-9z" fill="#fff" stroke="#424242" stroke-width="1"/><path d="M9 2.500v3.500h3.500" fill="none" stroke="#424242" stroke-width="1"/><path d="M5 5.500h2.500M5 7.500h6M5 9.500h6M5 11.500h6" fill="none" stroke="#424242" stroke-width="1"/></svg>
<span class="t" style="left:42px;top:262.03px;line-height:18px;font-size:12px;color:#1e1e1e;letter-spacing:0.094px;">cWebMenuItem.pkg</span>
<svg class="i" style="left:21.0px;top:281.0px" width="16" height="16" viewBox="0 0 16 16"><path d="M3.500 2.500h5.500l3.500 3.500v7.500h-9z" fill="#fff" stroke="#424242" stroke-width="1"/><path d="M9 2.500v3.500h3.500" fill="none" stroke="#424242" stroke-width="1"/><path d="M5 5.500h2.500M5 7.500h6M5 9.500h6M5 11.500h6" fill="none" stroke="#424242" stroke-width="1"/></svg>
<span class="t" style="left:42px;top:280.03px;line-height:18px;font-size:12px;color:#1e1e1e;letter-spacing:-0.011px;">cWebForm.pkg</span>
<svg class="i" style="left:21.0px;top:299.0px" width="16" height="16" viewBox="0 0 16 16"><path d="M3.500 2.500h5.500l3.500 3.500v7.500h-9z" fill="#fff" stroke="#424242" stroke-width="1"/><path d="M9 2.500v3.500h3.500" fill="none" stroke="#424242" stroke-width="1"/><path d="M5 5.500h2.500M5 7.500h6M5 9.500h6M5 11.500h6" fill="none" stroke="#424242" stroke-width="1"/></svg>
<span class="t" style="left:42px;top:298.03px;line-height:18px;font-size:12px;color:#1e1e1e;letter-spacing:0.141px;">cWebColumnButton.pkg</span>
<svg class="i" style="left:21.0px;top:317.0px" width="16" height="16" viewBox="0 0 16 16"><path d="M3.500 2.500h5.500l3.500 3.500v7.500h-9z" fill="#fff" stroke="#424242" stroke-width="1"/><path d="M9 2.500v3.500h3.500" fill="none" stroke="#424242" stroke-width="1"/><path d="M5 5.500h2.500M5 7.500h6M5 9.500h6M5 11.500h6" fill="none" stroke="#424242" stroke-width="1"/></svg>
<span class="t" style="left:42px;top:316.03px;line-height:18px;font-size:12px;color:#1e1e1e;letter-spacing:0.019px;">cCustomerDataDictionary.dd</span>
<svg class="i" style="left:21.0px;top:335.0px" width="16" height="16" viewBox="0 0 16 16"><path d="M8 1.800l5 2.900v6.300L8 14l-5-3V4.700z M3 4.700L8 7.600l5-2.900M8 7.600V14" fill="#fff" stroke="#424242" stroke-width="1.1"/></svg>
<span class="t" style="left:42px;top:334.03px;line-height:18px;font-size:12px;color:#1e1e1e;letter-spacing:-0.036px;">oManualLoadedListDemo</span>
<svg class="i" style="left:36.0px;top:353.0px" width="16" height="16" viewBox="0 0 16 16"><path d="M8 1.800l5 2.900v6.300L8 14l-5-3V4.700z M3 4.700L8 7.600l5-2.900M8 7.600V14" fill="#fff" stroke="#424242" stroke-width="1.1"/></svg>
<span class="t" style="left:57px;top:352.03px;line-height:18px;font-size:12px;color:#1e1e1e;letter-spacing:-0.224px;">oCustomer_DD</span>
<svg class="i" style="left:36.0px;top:371.0px" width="16" height="16" viewBox="0 0 16 16"><path d="M8 1.800l5 2.900v6.300L8 14l-5-3V4.700z M3 4.700L8 7.600l5-2.900M8 7.600V14" fill="#fff" stroke="#424242" stroke-width="1.1"/></svg>
<div style="left:55px;top:370.5px;width:29px;height:17px;background:#ececec;"></div>
<span class="t" style="left:57px;top:370.03px;line-height:18px;font-size:12px;color:#1e1e1e;letter-spacing:0.131px;">oList</span>
<svg class="i" style="left:51.0px;top:389.0px" width="16" height="16" viewBox="0 0 16 16"><path d="M8 1.800l5 2.900v6.300L8 14l-5-3V4.700z M3 4.700L8 7.600l5-2.900M8 7.600V14" fill="#fff" stroke="#424242" stroke-width="1.1"/></svg>
<span class="t" style="left:72px;top:388.03px;line-height:18px;font-size:12px;color:#1e1e1e;letter-spacing:0.077px;">oWebColumn1</span>
<svg class="i" style="left:51.0px;top:407.0px" width="16" height="16" viewBox="0 0 16 16"><path d="M8 1.800l5 2.900v6.300L8 14l-5-3V4.700z M3 4.700L8 7.600l5-2.900M8 7.600V14" fill="#fff" stroke="#424242" stroke-width="1.1"/></svg>
<span class="t" style="left:72px;top:406.03px;line-height:18px;font-size:12px;color:#1e1e1e;letter-spacing:0.077px;">oWebColumn2</span>
<svg class="i" style="left:51.0px;top:425.0px" width="16" height="16" viewBox="0 0 16 16"><path d="M8 1.800l5 2.900v6.300L8 14l-5-3V4.700z M3 4.700L8 7.600l5-2.900M8 7.600V14" fill="#fff" stroke="#424242" stroke-width="1.1"/></svg>
<span class="t" style="left:72px;top:424.03px;line-height:18px;font-size:12px;color:#1e1e1e;letter-spacing:0.077px;">oWebColumn3</span>
<span class="t" style="left:52px;top:441.20px;line-height:18px;font-size:13px;color:#6a6a6a;font-weight:bold;font-family:'Liberation Serif',serif;font-style:italic;">px</span>
<span class="t" style="left:72px;top:442.03px;line-height:18px;font-size:12px;color:#1e1e1e;letter-spacing:-0.088px;">OnManualLoadData</span>
<span class="t" style="left:52px;top:459.20px;line-height:18px;font-size:13px;color:#6a6a6a;font-weight:bold;font-family:'Liberation Serif',serif;font-style:italic;">px</span>
<span class="t" style="left:72px;top:460.03px;line-height:18px;font-size:12px;color:#1e1e1e;letter-spacing:-0.117px;">OnLoad</span>
<svg class="i" style="left:13px;top:163px" width="1" height="175"><path d="M0.5 0V175" stroke="#555" stroke-width="1" stroke-dasharray="1 1"/></svg>
<svg class="i" style="left:14px;top:163px" width="6" height="1"><path d="M0 0.5H6" stroke="#555" stroke-width="1" stroke-dasharray="1 1"/></svg>
<svg class="i" style="left:14px;top:181px" width="6" height="1"><path d="M0 0.5H6" stroke="#555" stroke-width="1" stroke-dasharray="1 1"/></svg>
<svg class="i" style="left:14px;top:199px" width="6" height="1"><path d="M0 0.5H6" stroke="#555" stroke-width="1" stroke-dasharray="1 1"/></svg>
<svg class="i" style="left:14px;top:217px" width="6" height="1"><path d="M0 0.5H6" stroke="#555" stroke-width="1" stroke-dasharray="1 1"/></svg>
<svg class="i" style="left:14px;top:235px" width="6" height="1"><path d="M0 0.5H6" stroke="#555" stroke-width="1" stroke-dasharray="1 1"/></svg>
<svg class="i" style="left:14px;top:253px" width="6" height="1"><path d="M0 0.5H6" stroke="#555" stroke-width="1" stroke-dasharray="1 1"/></svg>
<svg class="i" style="left:14px;top:271px" width="6" height="1"><path d="M0 0.5H6" stroke="#555" stroke-width="1" stroke-dasharray="1 1"/></svg>
<svg class="i" style="left:14px;top:289px" width="6" height="1"><path d="M0 0.5H6" stroke="#555" stroke-width="1" stroke-dasharray="1 1"/></svg>
<svg class="i" style="left:14px;top:307px" width="6" height="1"><path d="M0 0.5H6" stroke="#555" stroke-width="1" stroke-dasharray="1 1"/></svg>
<svg class="i" style="left:14px;top:325px" width="6" height="1"><path d="M0 0.5H6" stroke="#555" stroke-width="1" stroke-dasharray="1 1"/></svg>
<svg class="i" style="left:8.5px;top:338.5px" width="9" height="9"><rect x="0.5" y="0.5" width="8" height="8" fill="#fff" stroke="#919191"/><path d="M2.5 4.5h4" stroke="#404040"/></svg>
<svg class="i" style="left:28px;top:350px" width="1" height="30"><path d="M0.5 0V30" stroke="#555" stroke-width="1" stroke-dasharray="1 1"/></svg>
<svg class="i" style="left:29px;top:361px" width="7" height="1"><path d="M0 0.5H7" stroke="#555" stroke-width="1" stroke-dasharray="1 1"/></svg>
<svg class="i" style="left:23.5px;top:374.5px" width="9" height="9"><rect x="0.5" y="0.5" width="8" height="8" fill="#fff" stroke="#919191"/><path d="M2.5 4.5h4" stroke="#404040"/></svg>
<svg class="i" style="left:43px;top:386px" width="1" height="84"><path d="M0.5 0V84" stroke="#555" stroke-width="1" stroke-dasharray="1 1"/></svg>
<svg class="i" style="left:44px;top:397px" width="7" height="1"><path d="M0 0.5H7" stroke="#555" stroke-width="1" stroke-dasharray="1 1"/></svg>
<svg class="i" style="left:44px;top:415px" width="7" height="1"><path d="M0 0.5H7" stroke="#555" stroke-width="1" stroke-dasharray="1 1"/></svg>
<svg class="i" style="left:44px;top:433px" width="7" height="1"><path d="M0 0.5H7" stroke="#555" stroke-width="1" stroke-dasharray="1 1"/></svg>
<svg class="i" style="left:44px;top:451px" width="7" height="1"><path d="M0 0.5H7" stroke="#555" stroke-width="1" stroke-dasharray="1 1"/></svg>
<svg class="i" style="left:44px;top:469px" width="7" height="1"><path d="M0 0.5H7" stroke="#555" stroke-width="1" stroke-dasharray="1 1"/></svg>
<div style="left:2px;top:745px;width:98px;height:21px;background:#ececee;border:1px solid #dcdce0;border-top:none;"></div>
<svg class="i" style="left:6.0px;top:747.0px" width="16" height="16" viewBox="0 0 16 16"><path d="M5.500 3.500v-2h9v9h-2" fill="none" stroke="#424242" stroke-width="1.1"/><path d="M3.500 5.500v-2h9v2" fill="none" stroke="#424242" stroke-width="1.1"/><path d="M1 6h9v9H1z" fill="#424242"/><path d="M2 8.500h2v1.500H2zM5 8.500h2v1.500H5zM2 11h2v1.500H2zM5 11h2v1.500H5zM2 13.200h2v1H2zM5 13.200h2v1H5z" fill="#eee"/><path d="M11 7a2.600 2.600 0 1 0 .01 0z" fill="#fdfdfd" stroke="#424242" stroke-width="1.3"/><path d="M13 11.500l2.500 3" fill="none" stroke="#424242" stroke-width="1.8"/></svg>
<span class="t" style="left:26.5px;top:745.43px;line-height:18px;font-size:12px;color:#1e1e1e;letter-spacing:-0.292px;">Table Explor...</span>
<div style="left:100px;top:744px;width:103px;height:24px;background:#fdfdfd;"></div>
<svg class="i" style="left:104.0px;top:747.5px" width="16" height="16" viewBox="0 0 16 16"><path d="M1.500 2.500h13v12h-13z" fill="#faefe2" stroke="#424242" stroke-width="1.2"/><path d="M1 1.500h14v2.500H1z" fill="#424242"/><path d="M4 6.500l3-1.500 2 2.500-3 1.500zM9 10l2.500-1 1.500 2.500-2.500 1z" fill="#d89a3a"/><path d="M8 8l2.500 2.500" fill="none" stroke="#b07820" stroke-width="1"/></svg>
<span class="t" style="left:124.5px;top:746.03px;line-height:18px;font-size:12px;color:#1e1e1e;letter-spacing:-0.170px;">Code Explor...</span>
<div style="left:203px;top:745px;width:99px;height:21px;background:#ececee;border:1px solid #dcdce0;border-top:none;"></div>
<svg class="i" style="left:207.0px;top:747.0px" width="16" height="16" viewBox="0 0 16 16"><path d="M8 1.500c5 0 8 2.500 7 5-1 2-4 .500-4.500 2.500s3 2.500 1.500 4.500C10 15.500 1 14.500 1 8c0-4 3-6.500 7-6.500z" fill="#424242"/><circle cx="4" cy="8.500" r="1" fill="#eee"/><circle cx="5.500" cy="5" r="1" fill="#eee"/><circle cx="9" cy="3.800" r="1" fill="#eee"/><circle cx="5.500" cy="11.800" r="1" fill="#eee"/><circle cx="12.500" cy="5" r="1" fill="#eee"/></svg>
<span class="t" style="left:227.5px;top:745.43px;line-height:18px;font-size:12px;color:#1e1e1e;letter-spacing:-0.269px;">Class Palett...</span>
<div style="left:0px;top:772px;width:310px;height:20px;background:#bdc9db;border:1px solid #959eae;border-bottom:none;border-left-color:#a9b2c2;"></div>
<span class="t" style="left:4px;top:773.43px;line-height:18px;font-size:12px;color:#1e1e1e;letter-spacing:-0.073px;">File Navigator</span>
<svg class="i" style="left:280px;top:776px" width="28" height="12"><path d="M2.500 2v5.500M5.500 2v5.500M0.500 7.500h7M4 7.500v3.500" stroke="#000" stroke-width="1.500" fill="none"/><path d="M18.500 2.500l6 6M24.500 2.500l-6 6" stroke="#1e1e1e" stroke-width="1.300"/></svg>
<div style="left:0px;top:792px;width:310px;height:227px;background:#fff;border:1px solid #828790;border-top-color:#9aa0aa;"></div>
<svg class="i" style="left:6.0px;top:795.0px" width="16" height="16" viewBox="0 0 16 16"><path d="M3.500 2.500h5.500l3.500 3.500v7.500h-9z" fill="#fff" stroke="#424242" stroke-width="1"/><path d="M9 2.500v3.500h3.500" fill="none" stroke="#424242" stroke-width="1"/><path d="M5 5.500h2.500M5 7.500h6M5 9.500h6M5 11.500h6" fill="none" stroke="#424242" stroke-width="1"/></svg>
<span class="t" style="left:27px;top:794.03px;line-height:18px;font-size:12px;color:#1e1e1e;letter-spacing:-0.115px;">Dashboard.wo</span>
<svg class="i" style="left:6.0px;top:813.0px" width="16" height="16" viewBox="0 0 16 16"><path d="M3.500 2.500h5.500l3.500 3.500v7.500h-9z" fill="#fff" stroke="#424242" stroke-width="1"/><path d="M9 2.500v3.500h3.500" fill="none" stroke="#424242" stroke-width="1"/><path d="M5 5.500h2.500M5 7.500h6M5 9.500h6M5 11.500h6" fill="none" stroke="#424242" stroke-width="1"/></svg>
<span class="t" style="left:27px;top:812.03px;line-height:18px;font-size:12px;color:#1e1e1e;letter-spacing:-0.171px;">ExpandPanelDemo.wo</span>
<svg class="i" style="left:7.0px;top:831.0px" width="16" height="16" viewBox="0 0 16 16"><path d="M2.500 1.500h5.500l3.500 3.500v8.500h-9z" fill="#fff" stroke="#424242" stroke-width="1"/><path d="M8 1.500v3.500h3.500" fill="none" stroke="#424242" stroke-width="1"/><path d="M4 4.500h2.500M4 6.500h6M4 8.500h5M4 10.500h3" fill="none" stroke="#424242" stroke-width="1"/><path d="M8 9h7v7H8z" fill="#1a5a9a"/><path d="M10 9h3v2.500h-3z" fill="#fff"/></svg>
<span class="t" style="left:27px;top:830.03px;line-height:18px;font-size:12px;color:#000;letter-spacing:-0.247px;font-weight:bold;">ManualLoadedListDemo.wo</span>
<svg class="i" style="left:6.0px;top:849.0px" width="16" height="16" viewBox="0 0 16 16"><path d="M3.500 2.500h5.500l3.500 3.500v7.500h-9z" fill="#fff" stroke="#424242" stroke-width="1"/><path d="M9 2.500v3.500h3.500" fill="none" stroke="#424242" stroke-width="1"/><path d="M5 5.500h2.500M5 7.500h6M5 9.500h6M5 11.500h6" fill="none" stroke="#424242" stroke-width="1"/></svg>
<span class="t" style="left:27px;top:848.03px;line-height:18px;font-size:12px;color:#1e1e1e;letter-spacing:-0.045px;">RowLayoutDemo.wo</span>
<svg class="i" style="left:6.0px;top:867.0px" width="16" height="16" viewBox="0 0 16 16"><path d="M3.500 2.500h5.500l3.500 3.500v7.500h-9z" fill="#fff" stroke="#424242" stroke-width="1"/><path d="M9 2.500v3.500h3.500" fill="none" stroke="#424242" stroke-width="1"/><path d="M5 5.500h2.500M5 7.500h6M5 9.500h6M5 11.500h6" fill="none" stroke="#424242" stroke-width="1"/></svg>
<span class="t" style="left:27px;top:866.03px;line-height:18px;font-size:12px;color:#1e1e1e;letter-spacing:0.019px;">ScrollingDemo.wo</span>
<span class="t" style="left:324px;top:104.53px;line-height:18px;font-size:12px;color:#1e1e1e;letter-spacing:-0.171px;">ExpandPanelDemo.wo</span>
<span class="t" style="left:650px;top:104.53px;line-height:18px;font-size:12px;color:#1e1e1e;letter-spacing:-0.045px;">RowLayoutDemo.wo</span>
<span class="t" style="left:786px;top:104.53px;line-height:18px;font-size:12px;color:#1e1e1e;letter-spacing:0.081px;">ScrollingDemo.wo</span>
<span class="t" style="left:911px;top:104.53px;line-height:18px;font-size:12px;color:#1e1e1e;letter-spacing:-0.115px;">Dashboard.wo</span>
<div style="left:316px;top:122px;width:1310px;height:1px;background:#bcd0e2;"></div>
<div style="left:316px;top:123px;width:1310px;height:1px;background:#2e6f9f;"></div>
<div style="left:464px;top:105px;width:180px;height:19px;background:#1b84c8;"></div>
<span class="t" style="left:470px;top:104.53px;line-height:18px;font-size:12px;color:#fff;letter-spacing:-0.059px;">ManualLoadedListDemo.wo*</span>
<svg class="i" style="left:629px;top:108px" width="12" height="12"><path d="M2 2l8 8M10 2l-8 8" stroke="#fff" stroke-width="2"/></svg>
<svg class="i" style="left:1568px;top:104px" width="60" height="16"><path d="M9.5 3.5v8l-4-4z M19.5 3.5v8l4-4z" fill="none" stroke="#b4b4b8" stroke-width="1"/><path d="M30 6h8l-4 4z" fill="#6e6e6e"/><path d="M44 2.500l10 10M54 2.500l-10 10" stroke="#555" stroke-width="1.3"/></svg>
<div style="left:316px;top:124px;width:1310px;height:699px;background:#fff;"></div>
<div style="left:316px;top:124px;width:24px;height:681px;background:#dddded;"></div>
<div style="left:316px;top:124px;width:1293px;height:681px;overflow:hidden;"><pre style="left:28px;top:1.2000000000000028px;">33
34
35
36
37
38
39
40
41
42
43
44
45
46
47
48
49
50
51
52
53
54
55
56
57
58
59
60
61
62
63
64
65
66
67
68
69
70</pre><pre style="left:52px;top:1.2000000000000028px;">        <b>Set</b> peDbGridType <b>to</b> gtManual

        <b>Object</b> oWebColumn1 <b>is</b> <b>a</b> cWebColumn
            <b>Set</b> psCaption <b>to</b> <i>"Customer Number"</i>
            <b>Set</b> piWidth <b>to</b> 50
        <b>End_Object</b>

        <b>Object</b> oWebColumn2 <b>is</b> <b>a</b> cWebColumn
            <b>Set</b> psCaption <b>to</b> <i>"Customer Name"</i>
            <b>Set</b> piWidth <b>to</b> 50
        <b>End_Object</b>

        <b>Object</b> oWebColumn3 <b>is</b> <b>a</b> cWebColumn
            <b>Set</b> psCaption <b>to</b> <i>"Customer City"</i>
            <b>Set</b> piWidth <b>to</b> 50
        <b>End_Object</b>

        <b>Procedure</b> OnManualLoadData tWebRow[]  <b>ByRef</b> aTheRows <b>String</b>  <b>ByRef</b> sCurrentRowID
            <b>Integer</b> iRow iCustomerNumberId iCustomerName
            <b>RowID</b> riRowId
            <b>Handle</b> hoDD

            <b>Forward</b> <b>Send</b> OnManualLoadData (<u>&amp;</u>aTheRows) (<u>&amp;</u>sCurrentRowID)

            <b>Move</b> 0 <b>to</b> iRow
            <b>Get</b> Server <b>to</b> hoDD
            <b>Send</b> Request_Read <b>of</b> hoDD FIRST_RECORD Customer.File_Number 1

            <b>While</b> (<b>Found</b>)

                <b>Increment</b> iRow
                <b>Send</b> Locate_Next <b>of</b> hoDD
            <b>Loop</b>
        <b>End_Procedure</b>

        <b>Procedure</b> OnLoad
            <b>Send</b> GridRefresh
        <b>End_Procedure</b></pre></div>
<div style="left:817px;top:450px;width:2px;height:16px;background:#000;"></div>
<div style="left:406px;top:418px;width:734px;height:123px;border:3px solid #e53f06;"></div>
<div style="left:1609px;top:124px;width:17px;height:682px;background:#efefef;"></div>
<div style="left:1609px;top:125px;width:15px;height:6px;background:#c9c9cd;"></div>
<div style="left:1609px;top:425px;width:15px;height:320px;background:#cbcbcb;"></div>
<svg class="i" style="left:1610.5px;top:134px" width="12" height="12" viewBox="-6 -6 12 12"><path d="M-3.5 2l3.5-3.5 3.5 3.500" fill="none" stroke="#555" stroke-width="2.1"/></svg>
<svg class="i" style="left:1610.5px;top:791px" width="12" height="12" viewBox="-6 -6 12 12"><path d="M-3.5-2l3.500 3.5 3.500-3.500" fill="none" stroke="#555" stroke-width="2.1"/></svg>
<div style="left:316px;top:806px;width:1310px;height:17px;background:#efefef;"></div>
<div style="left:316px;top:806px;width:7px;height:15px;background:#cbcbcb;"></div>
<div style="left:340px;top:806px;width:682px;height:15px;background:#cbcbcb;"></div>
<svg class="i" style="left:325px;top:808px" width="12" height="12" viewBox="-6 -6 12 12"><path d="M2-3.500l-3.500 3.5 3.500 3.500" fill="none" stroke="#555" stroke-width="2.1"/></svg>
<svg class="i" style="left:1593px;top:808px" width="12" height="12" viewBox="-6 -6 12 12"><path d="M-2-3.500l3.500 3.5-3.500 3.500" fill="none" stroke="#555" stroke-width="2.1"/></svg>
<div style="left:314px;top:828px;width:1313px;height:20px;background:#bdc9db;border:1px solid #959eae;border-bottom:none;border-left-color:#a9b2c2;"></div>
<span class="t" style="left:318px;top:829.43px;line-height:18px;font-size:12px;color:#1e1e1e;letter-spacing:0.496px;">Output</span>
<svg class="i" style="left:1597px;top:832px" width="28" height="12"><path d="M2.500 2v5.500M5.500 2v5.500M0.500 7.500h7M4 7.500v3.500" stroke="#000" stroke-width="1.500" fill="none"/><path d="M18.500 2.500l6 6M24.500 2.500l-6 6" stroke="#1e1e1e" stroke-width="1.300"/></svg>
<svg class="i" style="left:319.0px;top:853.0px" width="16" height="16" viewBox="0 0 16 16"><path d="M10.500 6a3.200 3.200 0 1 0 .01 0z" fill="#fdfdfd" stroke="#424242" stroke-width="1.3"/><path d="M8.300 11.500l-4 4" fill="none" stroke="#424242" stroke-width="2"/><path d="M3 3.500h5" fill="none" stroke="#1a5a9a" stroke-width="2"/><path d="M4.500 0L0 3.500 4.500 7z" fill="#1a5a9a"/></svg>
<svg class="i" style="left:341.0px;top:853.0px" width="16" height="16" viewBox="0 0 16 16"><path d="M11 6a3.200 3.200 0 1 0 .01 0z" fill="#fdfdfd" stroke="#424242" stroke-width="1.3"/><path d="M8.800 11.500l-4 4" fill="none" stroke="#424242" stroke-width="2"/><path d="M0 3.500h5" fill="none" stroke="#1a5a9a" stroke-width="2"/><path d="M4 0l4.500 3.500L4 7z" fill="#1a5a9a"/></svg>
<svg class="i" style="left:368.0px;top:853.0px" width="16" height="16" viewBox="0 0 16 16"><path d="M6.500 3.500v-2h4l3 3v6h-3" fill="none" stroke="#424242" stroke-width="1.1"/><path d="M2.500 5.500h5l2 2v7h-7z" fill="#f6f6f8" stroke="#424242" stroke-width="1.1"/></svg>
<svg class="i" style="left:390.0px;top:853.0px" width="16" height="16" viewBox="0 0 16 16"><path d="M3 2.500l10 11M13 2.500l-10 11" fill="none" stroke="#b8221c" stroke-width="2.3"/></svg>
<svg class="i" style="left:418.0px;top:853.0px" width="16" height="16" viewBox="0 0 16 16"><path d="M2.500 10.500v-9h9M4.500 12.500v-9h9" fill="none" stroke="#424242" stroke-width="1"/><path d="M6.500 5.500h8v9h-8z" fill="#f8f8f8" stroke="#424242" stroke-width="1.2"/><path d="M10.500 7.500v5M8 10h5" fill="none" stroke="#1a5a9a" stroke-width="1.3"/></svg>
<svg class="i" style="left:440.0px;top:853.0px" width="16" height="16" viewBox="0 0 16 16"><path d="M2.500 10.500v-9h9M4.500 12.500v-9h9" fill="none" stroke="#424242" stroke-width="1"/><path d="M6.500 5.500h8v9h-8z" fill="#f8f8f8" stroke="#424242" stroke-width="1.2"/><path d="M8 10h5" fill="none" stroke="#1a5a9a" stroke-width="1.3"/></svg>
<div style="left:362px;top:851px;width:1px;height:20px;background:#cfcfd6;"></div>
<div style="left:412px;top:851px;width:1px;height:20px;background:#cfcfd6;"></div>
<div style="left:314px;top:874px;width:1313px;height:120px;background:#fff;border:1px solid #828790;"></div>
<div style="left:1609px;top:875px;width:17px;height:118px;background:#efefef;"></div>
<div style="left:1609px;top:958px;width:15px;height:17px;background:#cbcbcb;"></div>
<svg class="i" style="left:1610.5px;top:879px" width="12" height="12" viewBox="-6 -6 12 12"><path d="M-3.5 2l3.5-3.5 3.5 3.500" fill="none" stroke="#555" stroke-width="2.1"/></svg>
<svg class="i" style="left:1610.5px;top:977px" width="12" height="12" viewBox="-6 -6 12 12"><path d="M-3.5-2l3.500 3.5 3.500-3.500" fill="none" stroke="#555" stroke-width="2.1"/></svg>
<svg class="i" style="left:327px;top:875px" width="1" height="101"><path d="M0.5 0V101" stroke="#555" stroke-width="1" stroke-dasharray="1 1"/></svg>
<svg class="i" style="left:342px;top:875px" width="1" height="65"><path d="M0.5 0V65" stroke="#555" stroke-width="1" stroke-dasharray="1 1"/></svg>
<svg class="i" style="left:343px;top:885px" width="7" height="1"><path d="M0 0.5H7" stroke="#555" stroke-width="1" stroke-dasharray="1 1"/></svg>
<svg class="i" style="left:353px;top:879px" width="10" height="12"><path d="M1.500 1l6 5-6 5z" fill="#fff" stroke="#444" stroke-width="1"/></svg>
<span class="t" style="left:371px;top:876.33px;line-height:18px;font-size:12px;color:#1e1e1e;letter-spacing:-0.299px;">Total Pages    : 0</span>
<svg class="i" style="left:343px;top:903px" width="7" height="1"><path d="M0 0.5H7" stroke="#555" stroke-width="1" stroke-dasharray="1 1"/></svg>
<svg class="i" style="left:353px;top:897px" width="10" height="12"><path d="M1.500 1l6 5-6 5z" fill="#fff" stroke="#444" stroke-width="1"/></svg>
<span class="t" style="left:371px;top:894.33px;line-height:18px;font-size:12px;color:#1e1e1e;letter-spacing:-0.380px;">Static Data    : 334261</span>
<svg class="i" style="left:343px;top:921px" width="7" height="1"><path d="M0 0.5H7" stroke="#555" stroke-width="1" stroke-dasharray="1 1"/></svg>
<svg class="i" style="left:353px;top:915px" width="10" height="12"><path d="M1.500 1l6 5-6 5z" fill="#fff" stroke="#444" stroke-width="1"/></svg>
<span class="t" style="left:371px;top:912.33px;line-height:18px;font-size:12px;color:#1e1e1e;letter-spacing:-0.468px;">Message area   : 209365</span>
<svg class="i" style="left:343px;top:939px" width="7" height="1"><path d="M0 0.5H7" stroke="#555" stroke-width="1" stroke-dasharray="1 1"/></svg>
<svg class="i" style="left:353px;top:933px" width="10" height="12"><path d="M1.500 1l6 5-6 5z" fill="#fff" stroke="#444" stroke-width="1"/></svg>
<span class="t" style="left:371px;top:930.33px;line-height:18px;font-size:12px;color:#1e1e1e;letter-spacing:-0.276px;">Total Blocks   : 13232</span>
<svg class="i" style="left:328px;top:957px" width="7" height="1"><path d="M0 0.5H7" stroke="#555" stroke-width="1" stroke-dasharray="1 1"/></svg>
<svg class="i" style="left:328px;top:975px" width="7" height="1"><path d="M0 0.5H7" stroke="#555" stroke-width="1" stroke-dasharray="1 1"/></svg>
<svg class="i" style="left:335.0px;top:949.0px" width="16" height="16" viewBox="0 0 16 16"><circle cx="8" cy="8" r="7" fill="#3c3c3c"/><path d="M5 5h6v6H5z" fill="#f0f0f0"/></svg>
<svg class="i" style="left:335.0px;top:967.0px" width="16" height="16" viewBox="0 0 16 16"><circle cx="8" cy="8" r="7" fill="#1e8ad0"/><path d="M7 6.500h2v6H7zM7 3.200h2v2H7z" fill="#fff"/></svg>
<span class="t" style="left:356px;top:948.33px;line-height:18px;font-size:12px;color:#1e1e1e;letter-spacing:0.263px;">----Compile Finished----</span>
<div style="left:353px;top:966px;width:212px;height:18px;background:#ececec;"></div>
<span class="t" style="left:356px;top:966.33px;line-height:18px;font-size:12px;color:#1e1e1e;letter-spacing:-0.033px;">Starting web application: WebListDemo</span>
<div style="left:315px;top:994px;width:68px;height:25px;background:#fdfdfd;"></div>
<svg class="i" style="left:319.0px;top:998.5px" width="16" height="16" viewBox="0 0 16 16"><path d="M8 2.500H1.500v11H8" fill="none" stroke="#424242" stroke-width="1.4"/><path d="M4 8h8" fill="none" stroke="#424242" stroke-width="2.2"/><path d="M10 3.500l5 4.500-5 4.500z" fill="#424242"/></svg>
<span class="t" style="left:339px;top:997.33px;line-height:18px;font-size:12px;color:#1e1e1e;letter-spacing:0.163px;">Output</span>
<div style="left:383.5px;top:996px;width:151.5px;height:20px;background:#ececee;border:1px solid #dcdce0;border-top:none;"></div>
<svg class="i" style="left:387.5px;top:998.0px" width="16" height="16" viewBox="0 0 16 16"><path d="M5 3.500h-2.500v11h11v-11h-2.500" fill="#f6f6f6" stroke="#424242" stroke-width="1.3"/><path d="M5.500 4.500v-1.500a2.500 2.500 0 0 1 5 0v1.500z" fill="#f6f6f6" stroke="#424242" stroke-width="1.2"/><path d="M5 9.500l2.500 3 4-6" fill="none" stroke="#424242" stroke-width="1.6"/></svg>
<span class="t" style="left:406.5px;top:997.03px;line-height:18px;font-size:12px;color:#1e1e1e;letter-spacing:-0.152px;">To Do List [WebApp.src]</span>
<div style="left:535.5px;top:996px;width:91px;height:20px;background:#ececee;border:1px solid #dcdce0;border-top:none;"></div>
<svg class="i" style="left:539.5px;top:998.0px" width="16" height="16" viewBox="0 0 16 16"><path d="M5.500 4v-2.500h5l3 3v9h-5" fill="none" stroke="#424242" stroke-width="1.1"/><path d="M10.500 1.500v3h3" fill="none" stroke="#424242" stroke-width="1"/><path d="M6.500 8a2.500 2.500 0 1 0 .01 0z" fill="#fff" stroke="#1a5a9a" stroke-width="1.4"/><path d="M4.800 12.200l-3.300 3.300" fill="none" stroke="#1a5a9a" stroke-width="1.8"/></svg>
<span class="t" style="left:560.0px;top:997.03px;line-height:18px;font-size:12px;color:#1e1e1e;letter-spacing:-0.307px;">Find Results</span>
<div style="left:627px;top:996px;width:90px;height:20px;background:#ececee;border:1px solid #dcdce0;border-top:none;"></div>
<svg class="i" style="left:631.0px;top:998.0px" width="16" height="16" viewBox="0 0 16 16"><path d="M4.500 3.500h9v8h-3" fill="none" stroke="#424242" stroke-width="1.2"/><path d="M4 1.500h10v2.500H4z" fill="#424242"/><circle cx="4.500" cy="10.500" r="4" fill="#d40a0a"/></svg>
<span class="t" style="left:651.5px;top:997.03px;line-height:18px;font-size:12px;color:#1e1e1e;letter-spacing:-0.170px;">Breakpoints</span>
<div style="left:717.5px;top:996px;width:205px;height:20px;background:#ececee;border:1px solid #dcdce0;border-top:none;"></div>
<svg class="i" style="left:721.5px;top:998.0px" width="16" height="16" viewBox="0 0 16 16"><path d="M1.500 2.500h13v11h-13z" fill="#f6f6f6" stroke="#424242" stroke-width="1.2"/><path d="M1 2h14v2.500H1z" fill="#424242"/><path d="M5 6l3.500 6.500h-7z" fill="#f2d21b"/><path d="M4.600 8h.9v2.500h-.9zM4.600 11h.9v.9h-.9z" fill="#222"/><path d="M8.500 9l2 2.500 3.500-5" fill="none" stroke="#424242" stroke-width="1.5"/></svg>
<span class="t" style="left:741.0px;top:997.03px;line-height:18px;font-size:12px;color:#1e1e1e;letter-spacing:-0.028px;">Problem Resolution [WebApp.src]</span>
<div style="left:1631px;top:102px;width:289px;height:20px;background:#bdc9db;border:1px solid #959eae;border-bottom:none;border-left-color:#a9b2c2;"></div>
<span class="t" style="left:1635px;top:103.43px;line-height:18px;font-size:12px;color:#1e1e1e;letter-spacing:-0.268px;">Workspace Explorer</span>
<svg class="i" style="left:1890px;top:106px" width="28" height="12"><path d="M2.500 2v5.500M5.500 2v5.500M0.500 7.500h7M4 7.500v3.500" stroke="#000" stroke-width="1.500" fill="none"/><path d="M18.500 2.500l6 6M24.500 2.500l-6 6" stroke="#1e1e1e" stroke-width="1.300"/></svg>
<span class="t" style="left:1636px;top:130.53px;line-height:18px;font-size:12px;color:#1e1e1e;letter-spacing:-0.064px;">Current Project:</span>
<div style="left:1726px;top:128px;width:190px;height:23px;background:#e3e3e5;border:1px solid #b5b5b8;"></div>
<span class="t" style="left:1730.5px;top:130.53px;line-height:18px;font-size:12px;color:#1e1e1e;letter-spacing:-0.114px;">WebApp.src</span>
<svg class="i" style="left:1902.5px;top:133.5px" width="12" height="12" viewBox="-6 -6 12 12"><path d="M-3.5-2l3.500 3.5 3.500-3.500" fill="none" stroke="#444" stroke-width="2.1"/></svg>
<div style="left:1631px;top:155px;width:289px;height:307px;background:#fff;border:1px solid #828790;"></div>
<svg class="i" style="left:1639.5px;top:162.5px" width="9" height="9"><rect x="0.5" y="0.5" width="8" height="8" fill="#fff" stroke="#919191"/><path d="M2.5 4.5h4" stroke="#404040"/></svg>
<svg class="i" style="left:1652.0px;top:158.0px" width="16" height="16" viewBox="0 0 16 16"><path d="M1.500 6V1.500h13v10.500h-5" fill="none" stroke="#424242" stroke-width="1.1"/><path d="M1 1h14v3H1z" fill="#424242"/><path d="M4.500 6.700a4.300 4.300 0 1 0 .01 0zM.200 11h8.600M4.500 6.700v8.600M2.500 7.500c-.900 2.200-.900 4.800 0 7M6.500 7.500c.900 2.200.900 4.800 0 7" fill="#fff" stroke="#424242" stroke-width="0.9"/></svg>
<span class="t" style="left:1673px;top:157.33px;line-height:18px;font-size:12px;color:#1e1e1e;letter-spacing:-0.114px;">WebApp.src</span>
<svg class="i" style="left:1659px;top:174px" width="1" height="190"><path d="M0.5 0V190" stroke="#555" stroke-width="1" stroke-dasharray="1 1"/></svg>
<svg class="i" style="left:1654.5px;top:180.5px" width="9" height="9"><rect x="0.5" y="0.5" width="8" height="8" fill="#fff" stroke="#919191"/><path d="M2.5 4.5h4" stroke="#404040"/></svg>
<svg class="i" style="left:1667.0px;top:176.0px" width="16" height="16" viewBox="0 0 16 16"><path d="M1.500 6V1.500h13v10.500h-5" fill="#fff" stroke="#424242" stroke-width="1.1"/><path d="M1 1h14v3H1z" fill="#424242"/><path d="M8 5.500h4.500v1.500H8zM10 8h2.500v1.300H10z" fill="#424242"/><path d="M4.500 6.700a4.300 4.300 0 1 0 .01 0zM.200 11h8.600M4.500 6.700v8.600M2.500 7.500c-.900 2.200-.900 4.800 0 7M6.500 7.500c.900 2.200.900 4.800 0 7" fill="#fff" stroke="#424242" stroke-width="0.9"/></svg>
<span class="t" style="left:1688px;top:175.33px;line-height:18px;font-size:12px;color:#1e1e1e;letter-spacing:-0.276px;">Web Views (7)</span>
<svg class="i" style="left:1674px;top:192px" width="1" height="118"><path d="M0.5 0V118" stroke="#555" stroke-width="1" stroke-dasharray="1 1"/></svg>
<svg class="i" style="left:1675px;top:202px" width="7" height="1"><path d="M0 0.5H7" stroke="#555" stroke-width="1" stroke-dasharray="1 1"/></svg>
<svg class="i" style="left:1682.0px;top:194.0px" width="16" height="16" viewBox="0 0 16 16"><path d="M3.500 2.500h5.500l3.500 3.500v7.500h-9z" fill="#fff" stroke="#424242" stroke-width="1"/><path d="M9 2.500v3.500h3.500" fill="none" stroke="#424242" stroke-width="1"/><path d="M5 5.500h2.500M5 7.500h6M5 9.500h6M5 11.500h6" fill="none" stroke="#424242" stroke-width="1"/></svg>
<span class="t" style="left:1703px;top:193.33px;line-height:18px;font-size:12px;color:#1e1e1e;letter-spacing:0.031px;">ClientSortingDemo.wo</span>
<svg class="i" style="left:1675px;top:220px" width="7" height="1"><path d="M0 0.5H7" stroke="#555" stroke-width="1" stroke-dasharray="1 1"/></svg>
<svg class="i" style="left:1682.0px;top:212.0px" width="16" height="16" viewBox="0 0 16 16"><path d="M3.500 2.500h5.500l3.500 3.500v7.500h-9z" fill="#fff" stroke="#424242" stroke-width="1"/><path d="M9 2.500v3.500h3.500" fill="none" stroke="#424242" stroke-width="1"/><path d="M5 5.500h2.500M5 7.500h6M5 9.500h6M5 11.500h6" fill="none" stroke="#424242" stroke-width="1"/></svg>
<div style="left:1701px;top:212px;width:80px;height:17px;background:#ececec;"></div>
<span class="t" style="left:1703px;top:211.33px;line-height:18px;font-size:12px;color:#1e1e1e;letter-spacing:-0.115px;">Dashboard.wo</span>
<svg class="i" style="left:1675px;top:238px" width="7" height="1"><path d="M0 0.5H7" stroke="#555" stroke-width="1" stroke-dasharray="1 1"/></svg>
<svg class="i" style="left:1682.0px;top:230.0px" width="16" height="16" viewBox="0 0 16 16"><path d="M3.500 2.500h5.500l3.500 3.500v7.500h-9z" fill="#fff" stroke="#424242" stroke-width="1"/><path d="M9 2.500v3.500h3.500" fill="none" stroke="#424242" stroke-width="1"/><path d="M5 5.500h2.500M5 7.500h6M5 9.500h6M5 11.500h6" fill="none" stroke="#424242" stroke-width="1"/></svg>
<span class="t" style="left:1703px;top:229.33px;line-height:18px;font-size:12px;color:#1e1e1e;letter-spacing:-0.171px;">ExpandPanelDemo.wo</span>
<svg class="i" style="left:1675px;top:256px" width="7" height="1"><path d="M0 0.5H7" stroke="#555" stroke-width="1" stroke-dasharray="1 1"/></svg>
<svg class="i" style="left:1682.0px;top:248.0px" width="16" height="16" viewBox="0 0 16 16"><path d="M3.500 2.500h5.500l3.500 3.500v7.500h-9z" fill="#fff" stroke="#424242" stroke-width="1"/><path d="M9 2.500v3.500h3.500" fill="none" stroke="#424242" stroke-width="1"/><path d="M5 5.500h2.500M5 7.500h6M5 9.500h6M5 11.500h6" fill="none" stroke="#424242" stroke-width="1"/></svg>
<span class="t" style="left:1703px;top:247.33px;line-height:18px;font-size:12px;color:#1e1e1e;letter-spacing:0.121px;">Login.wo</span>
<svg class="i" style="left:1675px;top:274px" width="7" height="1"><path d="M0 0.5H7" stroke="#555" stroke-width="1" stroke-dasharray="1 1"/></svg>
<svg class="i" style="left:1682.0px;top:266.0px" width="16" height="16" viewBox="0 0 16 16"><path d="M3.500 2.500h5.500l3.500 3.500v7.500h-9z" fill="#fff" stroke="#424242" stroke-width="1"/><path d="M9 2.500v3.500h3.500" fill="none" stroke="#424242" stroke-width="1"/><path d="M5 5.500h2.500M5 7.500h6M5 9.500h6M5 11.500h6" fill="none" stroke="#424242" stroke-width="1"/></svg>
<span class="t" style="left:1703px;top:265.33px;line-height:18px;font-size:12px;color:#1e1e1e;letter-spacing:-0.033px;">ManualLoadedListDemo.wo</span>
<svg class="i" style="left:1675px;top:292px" width="7" height="1"><path d="M0 0.5H7" stroke="#555" stroke-width="1" stroke-dasharray="1 1"/></svg>
<svg class="i" style="left:1682.0px;top:284.0px" width="16" height="16" viewBox="0 0 16 16"><path d="M3.500 2.500h5.500l3.500 3.500v7.500h-9z" fill="#fff" stroke="#424242" stroke-width="1"/><path d="M9 2.500v3.500h3.500" fill="none" stroke="#424242" stroke-width="1"/><path d="M5 5.500h2.500M5 7.500h6M5 9.500h6M5 11.500h6" fill="none" stroke="#424242" stroke-width="1"/></svg>
<span class="t" style="left:1703px;top:283.33px;line-height:18px;font-size:12px;color:#1e1e1e;letter-spacing:-0.045px;">RowLayoutDemo.wo</span>
<svg class="i" style="left:1675px;top:310px" width="7" height="1"><path d="M0 0.5H7" stroke="#555" stroke-width="1" stroke-dasharray="1 1"/></svg>
<svg class="i" style="left:1682.0px;top:302.0px" width="16" height="16" viewBox="0 0 16 16"><path d="M3.500 2.500h5.500l3.500 3.500v7.500h-9z" fill="#fff" stroke="#424242" stroke-width="1"/><path d="M9 2.500v3.500h3.500" fill="none" stroke="#424242" stroke-width="1"/><path d="M5 5.500h2.500M5 7.500h6M5 9.500h6M5 11.500h6" fill="none" stroke="#424242" stroke-width="1"/></svg>
<span class="t" style="left:1703px;top:301.33px;line-height:18px;font-size:12px;color:#1e1e1e;letter-spacing:0.019px;">ScrollingDemo.wo</span>
<svg class="i" style="left:1654.5px;top:324.5px" width="9" height="9"><rect x="0.5" y="0.5" width="8" height="8" fill="#fff" stroke="#919191"/><path d="M2.5 4.5h4 M4.5 2.5v4" stroke="#404040"/></svg>
<svg class="i" style="left:1667.0px;top:320.0px" width="16" height="16" viewBox="0 0 16 16"><path d="M11 1l3.500 2v3.500L11 8.500 7.500 6.500V3z M7.500 3L11 5l3.500-2M11 5v3.500" fill="#fff" stroke="#424242" stroke-width="0.9"/><path d="M5.500 6.500a4.200 4.200 0 1 0 .01 0zM1.300 10.700h8.400M5.500 6.500v8.400M3.500 7.500c-.800 2-.800 4.400 0 6.400M7.500 7.500c.800 2 .800 4.400 0 6.400" fill="#fff" stroke="#424242" stroke-width="0.9"/></svg>
<span class="t" style="left:1688px;top:319.33px;line-height:18px;font-size:12px;color:#1e1e1e;letter-spacing:-0.046px;">Web Components (2)</span>
<svg class="i" style="left:1654.5px;top:342.5px" width="9" height="9"><rect x="0.5" y="0.5" width="8" height="8" fill="#fff" stroke="#919191"/><path d="M2.5 4.5h4 M4.5 2.5v4" stroke="#404040"/></svg>
<svg class="i" style="left:1667.0px;top:338.0px" width="16" height="16" viewBox="0 0 16 16"><path d="M1.500 2.500h5.500l1 1 1-1h5.500v10.500h-5.500l-1 1-1-1h-5.500zM8 3.500v10" fill="#fff" stroke="#424242" stroke-width="1.2"/></svg>
<span class="t" style="left:1688px;top:337.33px;line-height:18px;font-size:12px;color:#1e1e1e;letter-spacing:-0.160px;">Data Dictionaries (3)</span>
<svg class="i" style="left:1654.5px;top:360.5px" width="9" height="9"><rect x="0.5" y="0.5" width="8" height="8" fill="#fff" stroke="#919191"/><path d="M2.5 4.5h4 M4.5 2.5v4" stroke="#404040"/></svg>
<svg class="i" style="left:1667.0px;top:356.0px" width="16" height="16" viewBox="0 0 16 16"><path d="M6.500 2.500h5l2 2v7.500" fill="none" stroke="#424242" stroke-width="1"/><path d="M4.500 4.500h5l2 2v7" fill="none" stroke="#424242" stroke-width="1"/><path d="M2.500 6.500h5l2 2v6h-7z" fill="#fff" stroke="#424242" stroke-width="1"/><path d="M4 10.500h4M4 12.500h4" fill="none" stroke="#424242" stroke-width="0.9"/></svg>
<span class="t" style="left:1688px;top:355.33px;line-height:18px;font-size:12px;color:#1e1e1e;letter-spacing:-0.217px;">Other Files (11)</span>
<div style="left:1631px;top:467px;width:289px;height:20px;background:#bdc9db;border:1px solid #959eae;border-bottom:none;border-left-color:#a9b2c2;"></div>
<span class="t" style="left:1635px;top:468.43px;line-height:18px;font-size:12px;color:#1e1e1e;letter-spacing:-0.113px;">Properties (Inactive)</span>
<svg class="i" style="left:1890px;top:471px" width="28" height="12"><path d="M2.500 2v5.500M5.500 2v5.500M0.500 7.500h7M4 7.500v3.500" stroke="#000" stroke-width="1.500" fill="none"/><path d="M18.500 2.500l6 6M24.500 2.500l-6 6" stroke="#1e1e1e" stroke-width="1.300"/></svg>
<div style="left:1674px;top:495px;width:239px;height:23px;background:#eeeeee;border:1px solid #d0d0d3;box-shadow:inset 0 0 0 1px #fbfbfb;"></div>
<div style="left:1674px;top:527px;width:239px;height:23px;background:#eeeeee;border:1px solid #d0d0d3;box-shadow:inset 0 0 0 1px #fbfbfb;"></div>
<div style="left:1632px;top:565px;width:284px;height:431px;background:#f0f0f0;border:1px solid #e4e4e6;"></div>
<span class="t" style="left:1726px;top:573.03px;line-height:18px;font-size:12px;color:#000;letter-spacing:0.064px;font-weight:bold;">Nothing to Model</span>
<span class="t" style="left:1641px;top:603.03px;line-height:18px;font-size:12px;color:#000;letter-spacing:-0.099px;">No object, class or table is currently selected.</span>
<span class="t" style="left:1641px;top:633.03px;line-height:18px;font-size:12px;color:#000;letter-spacing:0.265px;">Hint:</span>
<span class="t" style="left:1641px;top:656.03px;line-height:18px;font-size:12px;color:#000;">•</span>
<span class="t" style="left:1641px;top:694.03px;line-height:18px;font-size:12px;color:#000;">•</span>
<span class="t" style="left:1641px;top:732.03px;line-height:18px;font-size:12px;color:#000;">•</span>
<span class="t" style="left:1650px;top:656.03px;line-height:18px;color:#000;letter-spacing:-0.204px;">Select an object or a class via <span style="color:#2a6099;text-decoration:underline;">Code Explorer</span> or</span>
<span class="t" style="left:1650px;top:671.03px;line-height:18px;font-size:12px;color:#000;letter-spacing:-0.114px;">the Visual Designer to view its properties.</span>
<span class="t" style="left:1650px;top:694.03px;line-height:18px;font-size:12px;color:#000;letter-spacing:-0.052px;">In the Code Editor position the cursor inside an</span>
<span class="t" style="left:1650px;top:709.03px;line-height:18px;font-size:12px;color:#000;letter-spacing:-0.148px;">object or a class declaration and press Ctrl+F7.</span>
<span class="t" style="left:1650px;top:732.03px;line-height:18px;color:#000;letter-spacing:-0.184px;">Select a Table via <span style="color:#2a6099;text-decoration:underline;">Table Explorer</span> or the Table</span>
<span class="t" style="left:1650px;top:747.03px;line-height:18px;font-size:12px;color:#000;letter-spacing:-0.002px;">Editor to view its attribute properties.</span>
<div style="left:1632px;top:995px;width:135px;height:24px;background:#fdfdfd;"></div>
<svg class="i" style="left:1636.0px;top:999.0px" width="16" height="16" viewBox="0 0 16 16"><path d="M5.500 1.500h9v13h-9z" fill="#fafafa" stroke="#424242" stroke-width="1.1"/><path d="M5.500 4.500h9M5.500 7.500h9M5.500 10.500h9M8.500 1.500v13" fill="none" stroke="#424242" stroke-width="1"/><path d="M1.500 6h3.500v5l-1 1v3h-1.500v-3l-1-1z" fill="#424242"/><path d="M2.200 3.500v3M4.200 3.500v3" fill="none" stroke="#424242" stroke-width="1"/></svg>
<span class="t" style="left:1655.5px;top:998.03px;line-height:18px;font-size:12px;color:#1e1e1e;letter-spacing:-0.137px;">Properties (Inactive)</span>
<div style="left:1767px;top:997px;width:145px;height:19px;background:#ececee;border:1px solid #dcdce0;border-top:none;"></div>
<svg class="i" style="left:1771.0px;top:998.5px" width="16" height="16" viewBox="0 0 16 16"><path d="M6.500 3.500v2M6.500 5.500M3 12v-2.500h7v2.500M6.500 7v2.500" fill="none" stroke="#424242" stroke-width="1.2"/><path d="M5 3.500h3v3.500H5zM1.500 11.500h3v3h-3zM8.500 11.500h3v3h-3z" fill="#424242"/><path d="M9.500 1.500h6v8h-6z" fill="#424242"/><ellipse cx="12.500" cy="2" rx="3" ry="1.300" fill="#eeeef2" stroke="#424242" stroke-width=".8"/></svg>
<span class="t" style="left:1791px;top:997.53px;line-height:18px;font-size:12px;color:#1e1e1e;letter-spacing:-0.208px;">DDO Explorer [Manu...</span>
<div style="left:0px;top:1019px;width:1920px;height:22px;background:#0e7acc;"></div>
<span class="t" style="left:3px;top:1021.53px;line-height:18px;font-size:12px;color:#fff;letter-spacing:0.044px;">C:\projects\WebListDemo\AppSrc\ManualLoadedListDemo.wo</span>
<span class="t" style="left:1537px;top:1021.53px;line-height:18px;font-size:12px;color:#fff;letter-spacing:-0.606px;">Ln 51</span>
<span class="t" style="left:1577px;top:1021.53px;line-height:18px;font-size:12px;color:#fff;letter-spacing:-0.281px;">Col 57</span>
<svg class="i" style="left:1759px;top:1022px" width="16" height="16"><circle cx="8" cy="8" r="6.500" fill="#bdbdbd" stroke="#fff" stroke-width="1.6"/><path d="M3.500 3.500l9 9" stroke="#fff" stroke-width="1.8"/></svg>
<span class="t" style="left:1793px;top:1021.53px;line-height:18px;font-size:12px;color:#fff;letter-spacing:-0.668px;">INS</span>
<span class="t" style="left:1837px;top:1021.53px;line-height:18px;font-size:12px;color:#5eb0ea;letter-spacing:-0.920px;">CAPS</span>
<span class="t" style="left:1881px;top:1021.53px;line-height:18px;font-size:12px;color:#fff;letter-spacing:0.224px;">NUM</span>
<div style="left:0px;top:1041px;width:1920px;height:39px;background:#1f428a;"></div>
<div style="left:196px;top:1041px;width:48px;height:39px;background:#2c56a4;"></div>
<svg class="i" style="left:16px;top:1053px" width="16" height="16" viewBox="0 0 18 18"><path d="M1 3l6.500-1v6.500H1z M8.500 1.800L17 0.500v8H8.500z M1 9.500h6.500V16L1 15z M8.500 9.500H17v8l-8.500-1.300z" fill="#fff"/></svg>
<svg class="i" style="left:63px;top:1052px" width="18" height="18"><circle cx="10.500" cy="7" r="5.200" fill="none" stroke="#fff" stroke-width="1.500"/><path d="M6.800 10.800L1.500 16.500" stroke="#fff" stroke-width="1.600"/></svg>
<svg class="i" style="left:110px;top:1053px" width="20" height="16"><path d="M2.500 3.500h10v8h-10z M1.500 1h12 M1.500 14h12 M2.500 1v2.500M12.500 1v2.500M2.500 11.500v2.500M12.500 11.500v2.500 M16 1v2.500 M16 5.500v7" fill="none" stroke="#fff" stroke-width="1.200"/></svg>
<svg class="i" style="left:159px;top:1049px" width="24" height="24" viewBox="0 0 24 24"><circle cx="12" cy="12" r="11" fill="#4caf50"/><path d="M12 12L2.470 6.500A11 11 0 0 1 21.530 6.500z" fill="#e53935"/><path d="M12 12L21.530 6.500A11 11 0 0 1 12 23z" fill="#fdd835"/><path d="M12 12L12 23A11 11 0 0 1 2.470 6.500z" fill="#43a047"/><circle cx="12" cy="12" r="5" fill="#fff"/><circle cx="12" cy="12" r="4" fill="#4285f4"/></svg>
<div style="left:208px;top:1049px;width:24px;height:24px;background:#d9380b;border-radius:1px 1px 6px 1px;"></div>
<span class="t" style="left:211px;top:1053.20px;line-height:18px;font-size:13px;color:#fff;letter-spacing:-0.164px;font-weight:bold;">DF</span>
<svg class="i" style="left:257px;top:1051px" width="22" height="20"><path d="M1 3h7l2 2h11v14H1z" fill="#f6c445"/><path d="M1 7h20v12H1z" fill="#fbd872"/><path d="M7 12h8v7H7z" fill="#4f9fe0"/><path d="M9 14h4v3H9z" fill="#fbd872"/></svg>
<div style="left:151px;top:1078px;width:40px;height:2px;background:#9fb2d8;"></div>
<div style="left:196px;top:1078px;width:48px;height:2px;background:#a9bce2;"></div>
<div style="left:249px;top:1078px;width:40px;height:2px;background:#9fb2d8;"></div>
</body></html>
